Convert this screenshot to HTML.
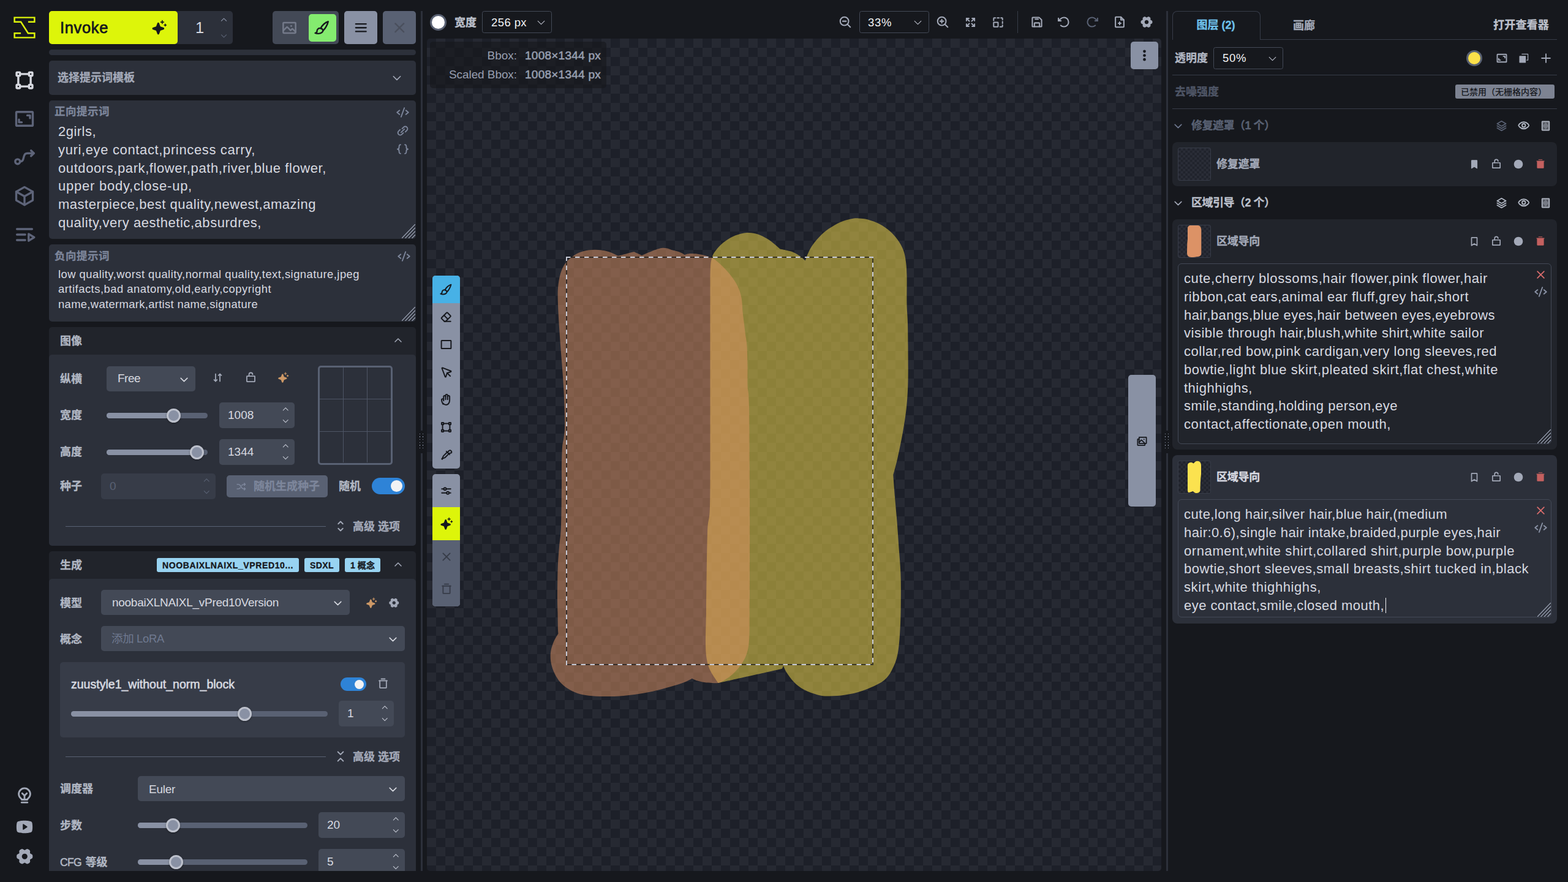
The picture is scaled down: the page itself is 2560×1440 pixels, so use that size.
<!DOCTYPE html>
<html lang="zh"><head><meta charset="utf-8"><title>Invoke - Canvas</title>
<style>
html,body{margin:0;padding:0}
body{width:2560px;height:1440px;background:#16181d;position:relative;overflow:hidden;font-family:"Liberation Sans","Noto Sans CJK SC",sans-serif;}
body div,body svg{position:absolute;box-sizing:border-box}
.t{white-space:pre}
</style></head><body>
<svg viewBox="0 0 44 44" style="left:22px;top:27px;width:36px;height:36px"><path d="M29.1951 10.6667H42V2H2V10.6667H14.8049L29.1951 33.3333H42V42H2V33.3333H14.8049" fill="none" stroke="#ddf50a" stroke-width="3"/></svg>
<svg viewBox="0 0 256 256" style="left:22.0px;top:113.0px;width:36px;height:36px;color:#d7d9e0;"><rect x="36" y="36" width="40" height="40" rx="6" fill="none" stroke="currentColor" stroke-width="24" stroke-linecap="round" stroke-linejoin="round"/><rect x="180" y="36" width="40" height="40" rx="6" fill="none" stroke="currentColor" stroke-width="24" stroke-linecap="round" stroke-linejoin="round"/><rect x="36" y="180" width="40" height="40" rx="6" fill="none" stroke="currentColor" stroke-width="24" stroke-linecap="round" stroke-linejoin="round"/><rect x="180" y="180" width="40" height="40" rx="6" fill="none" stroke="currentColor" stroke-width="24" stroke-linecap="round" stroke-linejoin="round"/><line x1="76" y1="56" x2="180" y2="56" fill="none" stroke="currentColor" stroke-width="24" stroke-linecap="round" stroke-linejoin="round"/><line x1="76" y1="200" x2="180" y2="200" fill="none" stroke="currentColor" stroke-width="24" stroke-linecap="round" stroke-linejoin="round"/><line x1="56" y1="76" x2="56" y2="180" fill="none" stroke="currentColor" stroke-width="24" stroke-linecap="round" stroke-linejoin="round"/><line x1="200" y1="76" x2="200" y2="180" fill="none" stroke="currentColor" stroke-width="24" stroke-linecap="round" stroke-linejoin="round"/></svg>
<svg viewBox="0 0 256 256" style="left:22.0px;top:176.0px;width:36px;height:36px;color:#5e6479;"><rect x="32" y="48" width="192" height="160" rx="8" fill="none" stroke="currentColor" stroke-width="24" stroke-linecap="round" stroke-linejoin="round"/><polyline points="160,88 192,88 192,120" fill="none" stroke="currentColor" stroke-width="24" stroke-linecap="round" stroke-linejoin="round"/><polyline points="96,168 64,168 64,136" fill="none" stroke="currentColor" stroke-width="24" stroke-linecap="round" stroke-linejoin="round"/></svg>
<svg viewBox="0 0 256 256" style="left:22.0px;top:239.0px;width:36px;height:36px;color:#5e6479;"><circle cx="48" cy="176" r="28" fill="none" stroke="currentColor" stroke-width="24" stroke-linecap="round" stroke-linejoin="round"/><path d="M76,176 C140,176 96,80 164,80 L236,80" fill="none" stroke="currentColor" stroke-width="24" stroke-linecap="round" stroke-linejoin="round"/><polyline points="204,48 236,80 204,112" fill="none" stroke="currentColor" stroke-width="24" stroke-linecap="round" stroke-linejoin="round"/></svg>
<svg viewBox="0 0 256 256" style="left:22.0px;top:302.0px;width:36px;height:36px;color:#5e6479;"><polygon points="128,24 224,78 224,178 128,232 32,178 32,78" fill="none" stroke="currentColor" stroke-width="24" stroke-linecap="round" stroke-linejoin="round"/><polyline points="32,78 128,132 224,78" fill="none" stroke="currentColor" stroke-width="24" stroke-linecap="round" stroke-linejoin="round"/><line x1="128" y1="132" x2="128" y2="232" fill="none" stroke="currentColor" stroke-width="24" stroke-linecap="round" stroke-linejoin="round"/></svg>
<svg viewBox="0 0 256 256" style="left:22.0px;top:365.0px;width:36px;height:36px;color:#5e6479;"><line x1="40" y1="64" x2="216" y2="64" fill="none" stroke="currentColor" stroke-width="24" stroke-linecap="round" stroke-linejoin="round"/><line x1="40" y1="128" x2="136" y2="128" fill="none" stroke="currentColor" stroke-width="24" stroke-linecap="round" stroke-linejoin="round"/><line x1="40" y1="192" x2="136" y2="192" fill="none" stroke="currentColor" stroke-width="24" stroke-linecap="round" stroke-linejoin="round"/><polygon points="240,160 176,200 176,120" fill="none" stroke="currentColor" stroke-width="24" stroke-linecap="round" stroke-linejoin="round"/></svg>
<svg viewBox="0 0 256 256" style="left:25.0px;top:1283.0px;width:30px;height:30px;color:#a3a9b8;"><line x1="88" y1="232" x2="168" y2="232" fill="none" stroke="currentColor" stroke-width="24" stroke-linecap="round" stroke-linejoin="round"/><path d="M78,176 a80,80 0 1 1 100,0 a16,16 0 0 0 -10,16 H88 a16,16 0 0 0 -10,-16 Z" fill="none" stroke="currentColor" stroke-width="24" stroke-linecap="round" stroke-linejoin="round"/><polyline points="96,104 128,136 160,104" fill="none" stroke="currentColor" stroke-width="24" stroke-linecap="round" stroke-linejoin="round"/><line x1="128" y1="136" x2="128" y2="192" fill="none" stroke="currentColor" stroke-width="24" stroke-linecap="round" stroke-linejoin="round"/></svg>
<svg viewBox="0 0 256 256" style="left:25.0px;top:1335.0px;width:30px;height:30px;color:#a3a9b8;"><path fill-rule="evenodd" fill="currentColor" stroke="none" d="M234,70 a24,24 0 0 0 -15,-17 C186,40 131,40 128,40 s-58,0 -91,13 a24,24 0 0 0 -15,17 C20,79 16,96 16,128 s4,49 6,58 a24,24 0 0 0 15,17 c32,12.5 87,13 91,13 s59,-0.5 91,-13 a24,24 0 0 0 15,-17 c2,-9 6,-26 6,-58 s-4,-49 -6,-58 Z M164,134.7 l-48,32 A8,8 0 0 1 104,160 V96 a8,8 0 0 1 12,-6.7 l48,32 a8,8 0 0 1 0,13.4 Z"/></svg>
<svg viewBox="0 0 256 256" style="left:24.75px;top:1382.75px;width:30.5px;height:30.5px;color:#a3a9b8;"><path fill-rule="evenodd" fill="currentColor" d="M238.0,128.0 L237.7,135.2 L236.7,142.3 L234.1,149.1 L229.2,155.1 L222.1,159.9 L214.0,163.6 L206.9,166.9 L202.5,171.0 L201.1,176.9 L201.8,184.7 L202.7,193.5 L202.1,202.1 L199.3,209.3 L194.8,215.0 L189.1,219.4 L183.0,223.3 L176.6,226.6 L170.0,229.3 L162.8,230.5 L155.1,229.2 L147.4,225.4 L140.1,220.3 L133.8,215.8 L128.0,214.0 L122.2,215.8 L115.9,220.3 L108.6,225.4 L100.9,229.2 L93.2,230.5 L86.0,229.3 L79.4,226.6 L73.0,223.3 L66.9,219.4 L61.2,215.0 L56.7,209.3 L53.9,202.1 L53.3,193.5 L54.2,184.7 L54.9,176.9 L53.5,171.0 L49.1,166.9 L42.0,163.6 L33.9,159.9 L26.8,155.1 L21.9,149.1 L19.3,142.3 L18.3,135.2 L18.0,128.0 L18.3,120.8 L19.3,113.7 L21.9,106.9 L26.8,100.9 L33.9,96.1 L42.0,92.4 L49.1,89.1 L53.5,85.0 L54.9,79.1 L54.2,71.3 L53.3,62.5 L53.9,53.9 L56.7,46.7 L61.2,41.0 L66.9,36.6 L73.0,32.7 L79.4,29.4 L86.0,26.7 L93.2,25.5 L100.9,26.8 L108.6,30.6 L115.9,35.7 L122.2,40.2 L128.0,42.0 L133.8,40.2 L140.1,35.7 L147.4,30.6 L155.1,26.8 L162.8,25.5 L170.0,26.7 L176.6,29.4 L183.0,32.7 L189.1,36.6 L194.8,41.0 L199.3,46.7 L202.1,53.9 L202.7,62.5 L201.8,71.3 L201.1,79.1 L202.5,85.0 L206.9,89.1 L214.0,92.4 L222.1,96.1 L229.2,100.9 L234.1,106.9 L236.7,113.7 L237.7,120.8Z M128,90 a38,38 0 1 0 0.01,0Z"/></svg>
<div style="left:80px;top:18px;width:300px;height:54px;background:#2c303a;border-radius:5px;"></div>
<div style="left:80px;top:18px;width:210px;height:54px;background:#ddf50a;border-radius:5px;"></div>
<div class="t" style="top:27.0px;height:36px;line-height:36px;font-size:25.5px;color:#16181d;-webkit-text-stroke:0.77px currentColor;letter-spacing:0.643px;left:98px;">Invoke</div>
<svg viewBox="0 0 256 256" style="left:247.0px;top:32.0px;width:26px;height:26px;color:#16181d;"><path fill="currentColor" stroke="none" d="M208,144a15.78,15.78,0,0,1-10.42,14.94L146,178l-19,51.62a15.92,15.92,0,0,1-29.88,0L78,178l-51.62-19a15.92,15.92,0,0,1,0-29.88L78,110l19-51.62a15.92,15.92,0,0,1,29.88,0L146,110l51.62,19A15.78,15.78,0,0,1,208,144ZM152,48h16V64a8,8,0,0,0,16,0V48h16a8,8,0,0,0,0-16H184V16a8,8,0,0,0-16,0V32H152a8,8,0,0,0,0,16Zm88,32h-8V72a8,8,0,0,0-16,0v8h-8a8,8,0,0,0,0,16h8v8a8,8,0,0,0,16,0V96h8a8,8,0,0,0,0-16Z"/></svg>
<div class="t" style="top:27.0px;height:36px;line-height:36px;font-size:25.5px;color:#d7d9e0;left:318.91px;">1</div>
<svg viewBox="0 0 256 256" style="left:358.5px;top:25.5px;width:13px;height:13px;color:#8991a4;"><polyline points="48,160 128,80 208,160" fill="none" stroke="currentColor" stroke-width="24" stroke-linecap="round" stroke-linejoin="round"/></svg>
<svg viewBox="0 0 256 256" style="left:358.5px;top:51.5px;width:13px;height:13px;color:#596173;"><polyline points="208,96 128,176 48,96" fill="none" stroke="currentColor" stroke-width="24" stroke-linecap="round" stroke-linejoin="round"/></svg>
<div style="left:445px;top:18px;width:108px;height:54px;background:#434956;border-radius:5px;"></div>
<svg viewBox="0 0 256 256" style="left:458.5px;top:31.5px;width:27px;height:27px;color:#747a8a;"><rect x="32" y="48" width="192" height="160" rx="8" fill="none" stroke="currentColor" stroke-width="24" stroke-linecap="round" stroke-linejoin="round"/><circle cx="156" cy="100" r="14" fill="currentColor" stroke="none"/><path d="M32,172 L86,118 a8,8 0 0 1 11,0 L146,167 l22,-22 a8,8 0 0 1 11,0 L224,190" fill="none" stroke="currentColor" stroke-width="24" stroke-linecap="round" stroke-linejoin="round"/></svg>
<div style="left:504px;top:23px;width:45px;height:45px;background:#84eb6f;border-radius:5px;"></div>
<svg viewBox="0 0 256 256" style="left:513.0px;top:32.0px;width:26px;height:26px;color:#16181d;"><path d="M224,32 C180,40 120,100 104,140 a44,44 0 0 1 36,36 C170,160 216,76 224,32 Z" fill="none" stroke="currentColor" stroke-width="24" stroke-linecap="round" stroke-linejoin="round"/><path d="M104,140 C60,130 40,170 44,196 C36,210 24,216 16,216 C40,228 100,232 128,204 C140,192 142,180 140,176" fill="none" stroke="currentColor" stroke-width="24" stroke-linecap="round" stroke-linejoin="round"/></svg>
<div style="left:562px;top:18px;width:54px;height:54px;background:#8991a4;border-radius:5px;"></div>
<svg viewBox="0 0 256 256" style="left:576.75px;top:32.75px;width:24.5px;height:24.5px;color:#16181d;"><line x1="40" y1="64" x2="216" y2="64" fill="none" stroke="currentColor" stroke-width="24" stroke-linecap="round" stroke-linejoin="round"/><line x1="40" y1="128" x2="216" y2="128" fill="none" stroke="currentColor" stroke-width="24" stroke-linecap="round" stroke-linejoin="round"/><line x1="40" y1="192" x2="216" y2="192" fill="none" stroke="currentColor" stroke-width="24" stroke-linecap="round" stroke-linejoin="round"/></svg>
<div style="left:625px;top:18px;width:54px;height:54px;background:#596173;border-radius:5px;"></div>
<svg viewBox="0 0 256 256" style="left:639.75px;top:32.75px;width:24.5px;height:24.5px;color:#4a4f5d;"><line x1="200" y1="56" x2="56" y2="200" fill="none" stroke="currentColor" stroke-width="24" stroke-linecap="round" stroke-linejoin="round"/><line x1="200" y1="200" x2="56" y2="56" fill="none" stroke="currentColor" stroke-width="24" stroke-linecap="round" stroke-linejoin="round"/></svg>
<div style="left:80px;top:81px;width:599px;height:9px;background:#2c303a;border-radius:4.5px;"></div>
<div style="left:80px;top:99px;width:599px;height:56px;background:#2c303a;border-radius:5px;"></div>
<div class="t" style="top:115.0px;height:25px;line-height:25px;font-size:18px;color:#a3a9b8;font-weight:700;-webkit-text-stroke:0.3px currentColor;left:94px;">选择提示词模板</div>
<svg viewBox="0 0 256 256" style="left:639.0px;top:118.0px;width:18px;height:18px;color:#a3a9b8;"><polyline points="208,96 128,176 48,96" fill="none" stroke="currentColor" stroke-width="24" stroke-linecap="round" stroke-linejoin="round"/></svg>
<div style="left:80px;top:164px;width:599px;height:226px;background:#2c303a;border-radius:5px;"></div>
<div class="t" style="top:170.0px;height:24px;line-height:24px;font-size:17.5px;color:#7d869b;font-weight:700;-webkit-text-stroke:0.3px currentColor;letter-spacing:0.500px;left:89px;">正向提示词</div>
<svg viewBox="0 0 256 256" style="left:646.5px;top:172.5px;width:21px;height:21px;color:#7d869b;"><polyline points="64,88 16,128 64,168" fill="none" stroke="currentColor" stroke-width="24" stroke-linecap="round" stroke-linejoin="round"/><polyline points="192,88 240,128 192,168" fill="none" stroke="currentColor" stroke-width="24" stroke-linecap="round" stroke-linejoin="round"/><line x1="160" y1="40" x2="96" y2="216" fill="none" stroke="currentColor" stroke-width="24" stroke-linecap="round" stroke-linejoin="round"/></svg>
<svg viewBox="0 0 256 256" style="left:646.5px;top:202.5px;width:21px;height:21px;color:#7d869b;"><line x1="96" y1="160" x2="160" y2="96" fill="none" stroke="currentColor" stroke-width="24" stroke-linecap="round" stroke-linejoin="round"/><path d="M181,149.5l29.5,-29.5a45.25,45.25 0 0 0 -64,-64L117,85.5" fill="none" stroke="currentColor" stroke-width="24" stroke-linecap="round" stroke-linejoin="round"/><path d="M139,170.5l-29.5,29.5a45.25,45.25 0 0 1 -64,-64L75,106.5" fill="none" stroke="currentColor" stroke-width="24" stroke-linecap="round" stroke-linejoin="round"/></svg>
<svg viewBox="0 0 256 256" style="left:646.5px;top:232.5px;width:21px;height:21px;color:#7d869b;"><path d="M84,40 C56,40 56,56 56,84 C56,112 48,128 24,128 C48,128 56,144 56,172 C56,200 56,216 84,216" fill="none" stroke="currentColor" stroke-width="24" stroke-linecap="round" stroke-linejoin="round"/><path d="M172,40 C200,40 200,56 200,84 C200,112 208,128 232,128 C208,128 200,144 200,172 C200,200 200,216 172,216" fill="none" stroke="currentColor" stroke-width="24" stroke-linecap="round" stroke-linejoin="round"/></svg>
<div class="t" style="top:199.0px;height:31px;line-height:31px;font-size:22px;color:#d7d9e0;letter-spacing:0.473px;left:95px;">2girls,</div>
<div class="t" style="top:228.75px;height:31px;line-height:31px;font-size:22px;color:#d7d9e0;letter-spacing:0.638px;left:95px;">yuri,eye contact,princess carry,</div>
<div class="t" style="top:258.5px;height:31px;line-height:31px;font-size:22px;color:#d7d9e0;letter-spacing:0.588px;left:95px;">outdoors,park,flower,path,river,blue flower,</div>
<div class="t" style="top:288.25px;height:31px;line-height:31px;font-size:22px;color:#d7d9e0;letter-spacing:0.758px;left:95px;">upper body,close-up,</div>
<div class="t" style="top:318.0px;height:31px;line-height:31px;font-size:22px;color:#d7d9e0;letter-spacing:0.521px;left:95px;">masterpiece,best quality,newest,amazing</div>
<div class="t" style="top:347.75px;height:31px;line-height:31px;font-size:22px;color:#d7d9e0;letter-spacing:0.550px;left:95px;">quality,very aesthetic,absurdres,</div>
<svg viewBox="0 0 22 23" style="left:655.5px;top:365.7px;width:22px;height:23px"><path d="M0,23 L22,0 M5.5,23 L22,5.75 M11,23 L22,11.5 M16.5,23 L22,17.25" stroke="#979eaf" stroke-width="1.3" fill="none"/></svg>
<div style="left:80px;top:399px;width:599px;height:126px;background:#2c303a;border-radius:5px;"></div>
<div class="t" style="top:406.0px;height:24px;line-height:24px;font-size:17.5px;color:#7d869b;font-weight:700;-webkit-text-stroke:0.3px currentColor;letter-spacing:0.500px;left:89px;">负向提示词</div>
<svg viewBox="0 0 256 256" style="left:648.5px;top:407.5px;width:21px;height:21px;color:#7d869b;"><polyline points="64,88 16,128 64,168" fill="none" stroke="currentColor" stroke-width="24" stroke-linecap="round" stroke-linejoin="round"/><polyline points="192,88 240,128 192,168" fill="none" stroke="currentColor" stroke-width="24" stroke-linecap="round" stroke-linejoin="round"/><line x1="160" y1="40" x2="96" y2="216" fill="none" stroke="currentColor" stroke-width="24" stroke-linecap="round" stroke-linejoin="round"/></svg>
<div class="t" style="top:434.5px;height:26px;line-height:26px;font-size:18.4px;color:#d7d9e0;letter-spacing:0.465px;left:95px;">low quality,worst quality,normal quality,text,signature,jpeg</div>
<div class="t" style="top:459.0px;height:26px;line-height:26px;font-size:18.4px;color:#d7d9e0;letter-spacing:0.501px;left:95px;">artifacts,bad anatomy,old,early,copyright</div>
<div class="t" style="top:483.5px;height:26px;line-height:26px;font-size:18.4px;color:#d7d9e0;letter-spacing:0.339px;left:95px;">name,watermark,artist name,signature</div>
<svg viewBox="0 0 22 23" style="left:655.5px;top:500.7px;width:22px;height:23px"><path d="M0,23 L22,0 M5.5,23 L22,5.75 M11,23 L22,11.5 M16.5,23 L22,17.25" stroke="#979eaf" stroke-width="1.3" fill="none"/></svg>
<div style="left:80px;top:534px;width:599px;height:357px;background:#21242b;border-radius:5px;"></div>
<div style="left:80px;top:579px;width:599px;height:312px;background:#2c303a;border-radius:5px;"></div>
<div class="t" style="top:544.5px;height:25px;line-height:25px;font-size:18px;color:#b1b7c3;font-weight:700;-webkit-text-stroke:0.3px currentColor;left:98px;">图像</div>
<svg viewBox="0 0 256 256" style="left:642.0px;top:548.0px;width:16px;height:16px;color:#a3a9b8;"><polyline points="48,160 128,80 208,160" fill="none" stroke="currentColor" stroke-width="24" stroke-linecap="round" stroke-linejoin="round"/></svg>
<div class="t" style="top:607.0px;height:25px;line-height:25px;font-size:18px;color:#b1b7c3;font-weight:700;-webkit-text-stroke:0.3px currentColor;left:98px;">纵横</div>
<div style="left:174px;top:598px;width:145px;height:41px;background:#434956;border-radius:5px;"></div>
<div class="t" style="top:604.2px;height:27px;line-height:27px;font-size:19px;color:#d7d9e0;letter-spacing:-0.520px;left:192px;">Free</div>
<svg viewBox="0 0 256 256" style="left:291.5px;top:610.5px;width:17px;height:17px;color:#d7d9e0;"><polyline points="208,96 128,176 48,96" fill="none" stroke="currentColor" stroke-width="24" stroke-linecap="round" stroke-linejoin="round"/></svg>
<svg viewBox="0 0 256 256" style="left:345.5px;top:606.5px;width:19px;height:19px;color:#a3a9b8;"><polyline points="112,176 80,208 48,176" fill="none" stroke="currentColor" stroke-width="24" stroke-linecap="round" stroke-linejoin="round"/><line x1="80" y1="48" x2="80" y2="208" fill="none" stroke="currentColor" stroke-width="24" stroke-linecap="round" stroke-linejoin="round"/><polyline points="144,80 176,48 208,80" fill="none" stroke="currentColor" stroke-width="24" stroke-linecap="round" stroke-linejoin="round"/><line x1="176" y1="208" x2="176" y2="48" fill="none" stroke="currentColor" stroke-width="24" stroke-linecap="round" stroke-linejoin="round"/></svg>
<svg viewBox="0 0 256 256" style="left:399.5px;top:606.5px;width:19px;height:19px;color:#a3a9b8;"><rect x="40" y="96" width="176" height="120" rx="8" fill="none" stroke="currentColor" stroke-width="24" stroke-linecap="round" stroke-linejoin="round"/><path d="M88,96 V60 a40,40 0 0 1 80,0" fill="none" stroke="currentColor" stroke-width="24" stroke-linecap="round" stroke-linejoin="round"/></svg>
<svg viewBox="0 0 256 256" style="left:452.5px;top:606.5px;width:19px;height:19px;color:#cd9866;"><path fill="currentColor" stroke="none" d="M208,144a15.78,15.78,0,0,1-10.42,14.94L146,178l-19,51.62a15.92,15.92,0,0,1-29.88,0L78,178l-51.62-19a15.92,15.92,0,0,1,0-29.88L78,110l19-51.62a15.92,15.92,0,0,1,29.88,0L146,110l51.62,19A15.78,15.78,0,0,1,208,144ZM152,48h16V64a8,8,0,0,0,16,0V48h16a8,8,0,0,0,0-16H184V16a8,8,0,0,0-16,0V32H152a8,8,0,0,0,0,16Zm88,32h-8V72a8,8,0,0,0-16,0v8h-8a8,8,0,0,0,0,16h8v8a8,8,0,0,0,16,0V96h8a8,8,0,0,0,0-16Z"/></svg>
<div style="left:519px;top:597px;width:122px;height:162px;border-radius:5px;border:3px solid #596173;"></div>
<div style="left:560px;top:600px;width:1px;height:155px;background:#4e5565;"></div>
<div style="left:598.5px;top:600px;width:1px;height:155px;background:#4e5565;"></div>
<div style="left:522px;top:651px;width:116px;height:1px;background:#4e5565;"></div>
<div style="left:522px;top:704px;width:116px;height:1px;background:#4e5565;"></div>
<div class="t" style="top:665.5px;height:25px;line-height:25px;font-size:18px;color:#b1b7c3;font-weight:700;-webkit-text-stroke:0.3px currentColor;left:98px;">宽度</div>
<div style="left:174px;top:673.5px;width:165px;height:9px;background:#596173;border-radius:4.5px;"></div>
<div style="left:174px;top:673.5px;width:109px;height:9px;background:#8991a4;border-radius:4.5px;"></div>
<div style="left:271.5px;top:666.5px;width:23px;height:23px;background:#8991a4;border-radius:12px;border:3px solid #bdc1cc;box-shadow:0 1px 3px rgba(0,0,0,.4);"></div>
<div style="left:358px;top:657px;width:123px;height:42px;background:#434956;border-radius:5px;"></div>
<div class="t" style="top:664.3px;height:27px;line-height:27px;font-size:19px;color:#d7d9e0;left:372px;">1008</div>
<svg viewBox="0 0 256 256" style="left:459.75px;top:662.25px;width:12.5px;height:12.5px;color:#bdc1cc;"><polyline points="48,160 128,80 208,160" fill="none" stroke="currentColor" stroke-width="24" stroke-linecap="round" stroke-linejoin="round"/></svg>
<svg viewBox="0 0 256 256" style="left:459.75px;top:681.25px;width:12.5px;height:12.5px;color:#bdc1cc;"><polyline points="208,96 128,176 48,96" fill="none" stroke="currentColor" stroke-width="24" stroke-linecap="round" stroke-linejoin="round"/></svg>
<div class="t" style="top:725.5px;height:25px;line-height:25px;font-size:18px;color:#b1b7c3;font-weight:700;-webkit-text-stroke:0.3px currentColor;left:98px;">高度</div>
<div style="left:174px;top:733.5px;width:165px;height:9px;background:#596173;border-radius:4.5px;"></div>
<div style="left:174px;top:733.5px;width:147px;height:9px;background:#8991a4;border-radius:4.5px;"></div>
<div style="left:309.5px;top:726.5px;width:23px;height:23px;background:#8991a4;border-radius:12px;border:3px solid #bdc1cc;box-shadow:0 1px 3px rgba(0,0,0,.4);"></div>
<div style="left:358px;top:717px;width:123px;height:42px;background:#434956;border-radius:5px;"></div>
<div class="t" style="top:724.3px;height:27px;line-height:27px;font-size:19px;color:#d7d9e0;left:372px;">1344</div>
<svg viewBox="0 0 256 256" style="left:459.75px;top:722.25px;width:12.5px;height:12.5px;color:#bdc1cc;"><polyline points="48,160 128,80 208,160" fill="none" stroke="currentColor" stroke-width="24" stroke-linecap="round" stroke-linejoin="round"/></svg>
<svg viewBox="0 0 256 256" style="left:459.75px;top:741.25px;width:12.5px;height:12.5px;color:#bdc1cc;"><polyline points="208,96 128,176 48,96" fill="none" stroke="currentColor" stroke-width="24" stroke-linecap="round" stroke-linejoin="round"/></svg>
<div class="t" style="top:781.5px;height:25px;line-height:25px;font-size:18px;color:#b1b7c3;font-weight:700;-webkit-text-stroke:0.3px currentColor;left:98px;">种子</div>
<div style="left:165px;top:773px;width:187px;height:42px;background:#373c48;border-radius:5px;"></div>
<div class="t" style="top:780.3px;height:27px;line-height:27px;font-size:19px;color:#596173;left:179px;">0</div>
<svg viewBox="0 0 256 256" style="left:330.75px;top:778.25px;width:12.5px;height:12.5px;color:#596173;"><polyline points="48,160 128,80 208,160" fill="none" stroke="currentColor" stroke-width="24" stroke-linecap="round" stroke-linejoin="round"/></svg>
<svg viewBox="0 0 256 256" style="left:330.75px;top:797.25px;width:12.5px;height:12.5px;color:#596173;"><polyline points="208,96 128,176 48,96" fill="none" stroke="currentColor" stroke-width="24" stroke-linecap="round" stroke-linejoin="round"/></svg>
<div style="left:370px;top:776px;width:165px;height:36px;background:#596173;border-radius:5px;"></div>
<svg viewBox="0 0 256 256" style="left:384.5px;top:785.5px;width:17px;height:17px;color:#7d869b;"><path d="M32,72 H56 a64,64 0 0 1 52,27 l40,58 a64,64 0 0 0 52,27 h32" fill="none" stroke="currentColor" stroke-width="24" stroke-linecap="round" stroke-linejoin="round"/><polyline points="208,48 232,72 208,96" fill="none" stroke="currentColor" stroke-width="24" stroke-linecap="round" stroke-linejoin="round"/><polyline points="208,160 232,184 208,208" fill="none" stroke="currentColor" stroke-width="24" stroke-linecap="round" stroke-linejoin="round"/><path d="M148,99 a64,64 0 0 1 52,-27 h32" fill="none" stroke="currentColor" stroke-width="24" stroke-linecap="round" stroke-linejoin="round"/><path d="M32,184 H56 a64,64 0 0 0 52,-27" fill="none" stroke="currentColor" stroke-width="24" stroke-linecap="round" stroke-linejoin="round"/></svg>
<div class="t" style="top:781.5px;height:25px;line-height:25px;font-size:18px;color:#7d869b;font-weight:700;-webkit-text-stroke:0.3px currentColor;left:414px;">随机生成种子</div>
<div class="t" style="top:781.5px;height:25px;line-height:25px;font-size:18px;color:#b1b7c3;font-weight:700;-webkit-text-stroke:0.3px currentColor;left:553px;">随机</div>
<div style="left:607px;top:780px;width:54px;height:27px;background:#2e83d7;border-radius:13.5px;"></div>
<div style="left:638px;top:784px;width:19px;height:19px;background:#f1f2f4;border-radius:9.5px;"></div>
<div style="left:107px;top:858.5px;width:425px;height:1px;background:#596173;"></div>
<svg viewBox="0 0 256 256" style="left:546.0px;top:849.0px;width:20px;height:20px;color:#a3a9b8;"><polyline points="80,176 128,224 176,176" fill="none" stroke="currentColor" stroke-width="24" stroke-linecap="round" stroke-linejoin="round"/><polyline points="80,80 128,32 176,80" fill="none" stroke="currentColor" stroke-width="24" stroke-linecap="round" stroke-linejoin="round"/></svg>
<div class="t" style="top:848.0px;height:25px;line-height:25px;font-size:18px;color:#a3a9b8;font-weight:700;-webkit-text-stroke:0.3px currentColor;left:576px;">高级 选项</div>
<div style="left:80px;top:900px;width:599px;height:540px;background:#21242b;border-radius:5px;"></div>
<div style="left:80px;top:945px;width:599px;height:500px;background:#2c303a;border-radius:5px 5px 0 0;"></div>
<div class="t" style="top:911.0px;height:25px;line-height:25px;font-size:18px;color:#b1b7c3;font-weight:700;-webkit-text-stroke:0.3px currentColor;left:98px;">生成</div>
<div style="left:256px;top:911px;width:232px;height:23px;background:#98d3f1;border-radius:3px;"></div>
<div class="t" style="top:912.5px;height:20px;line-height:20px;font-size:14px;color:#16181d;font-weight:700;-webkit-text-stroke:0.3px currentColor;letter-spacing:0.618px;left:265px;">NOOBAIXLNAIXL_VPRED10...</div>
<div style="left:497px;top:911px;width:57px;height:23px;background:#98d3f1;border-radius:3px;"></div>
<div class="t" style="top:912.5px;height:20px;line-height:20px;font-size:14px;color:#16181d;font-weight:700;-webkit-text-stroke:0.3px currentColor;letter-spacing:0.414px;left:506px;">SDXL</div>
<div style="left:563px;top:911px;width:58px;height:23px;background:#98d3f1;border-radius:3px;"></div>
<div class="t" style="top:912.5px;height:20px;line-height:20px;font-size:14px;color:#16181d;font-weight:700;-webkit-text-stroke:0.3px currentColor;letter-spacing:0.078px;left:572px;">1 概念</div>
<svg viewBox="0 0 256 256" style="left:642.0px;top:914.0px;width:16px;height:16px;color:#a3a9b8;"><polyline points="48,160 128,80 208,160" fill="none" stroke="currentColor" stroke-width="24" stroke-linecap="round" stroke-linejoin="round"/></svg>
<div class="t" style="top:972.5px;height:25px;line-height:25px;font-size:18px;color:#b1b7c3;font-weight:700;-webkit-text-stroke:0.3px currentColor;left:98px;">模型</div>
<div style="left:165px;top:963px;width:406px;height:41px;background:#434956;border-radius:5px;"></div>
<div class="t" style="top:969.5px;height:27px;line-height:27px;font-size:19px;color:#d7d9e0;letter-spacing:-0.283px;left:183px;">noobaiXLNAIXL_vPred10Version</div>
<svg viewBox="0 0 256 256" style="left:542.5px;top:975.5px;width:17px;height:17px;color:#d7d9e0;"><polyline points="208,96 128,176 48,96" fill="none" stroke="currentColor" stroke-width="24" stroke-linecap="round" stroke-linejoin="round"/></svg>
<svg viewBox="0 0 256 256" style="left:596.5px;top:974.5px;width:19px;height:19px;color:#cd9866;"><path fill="currentColor" stroke="none" d="M208,144a15.78,15.78,0,0,1-10.42,14.94L146,178l-19,51.62a15.92,15.92,0,0,1-29.88,0L78,178l-51.62-19a15.92,15.92,0,0,1,0-29.88L78,110l19-51.62a15.92,15.92,0,0,1,29.88,0L146,110l51.62,19A15.78,15.78,0,0,1,208,144ZM152,48h16V64a8,8,0,0,0,16,0V48h16a8,8,0,0,0,0-16H184V16a8,8,0,0,0-16,0V32H152a8,8,0,0,0,0,16Zm88,32h-8V72a8,8,0,0,0-16,0v8h-8a8,8,0,0,0,0,16h8v8a8,8,0,0,0,16,0V96h8a8,8,0,0,0,0-16Z"/></svg>
<svg viewBox="0 0 256 256" style="left:633.75px;top:974.75px;width:18.5px;height:18.5px;color:#a3a9b8;"><path fill-rule="evenodd" fill="currentColor" d="M238.0,128.0 L237.7,135.2 L236.7,142.3 L234.1,149.1 L229.2,155.1 L222.1,159.9 L214.0,163.6 L206.9,166.9 L202.5,171.0 L201.1,176.9 L201.8,184.7 L202.7,193.5 L202.1,202.1 L199.3,209.3 L194.8,215.0 L189.1,219.4 L183.0,223.3 L176.6,226.6 L170.0,229.3 L162.8,230.5 L155.1,229.2 L147.4,225.4 L140.1,220.3 L133.8,215.8 L128.0,214.0 L122.2,215.8 L115.9,220.3 L108.6,225.4 L100.9,229.2 L93.2,230.5 L86.0,229.3 L79.4,226.6 L73.0,223.3 L66.9,219.4 L61.2,215.0 L56.7,209.3 L53.9,202.1 L53.3,193.5 L54.2,184.7 L54.9,176.9 L53.5,171.0 L49.1,166.9 L42.0,163.6 L33.9,159.9 L26.8,155.1 L21.9,149.1 L19.3,142.3 L18.3,135.2 L18.0,128.0 L18.3,120.8 L19.3,113.7 L21.9,106.9 L26.8,100.9 L33.9,96.1 L42.0,92.4 L49.1,89.1 L53.5,85.0 L54.9,79.1 L54.2,71.3 L53.3,62.5 L53.9,53.9 L56.7,46.7 L61.2,41.0 L66.9,36.6 L73.0,32.7 L79.4,29.4 L86.0,26.7 L93.2,25.5 L100.9,26.8 L108.6,30.6 L115.9,35.7 L122.2,40.2 L128.0,42.0 L133.8,40.2 L140.1,35.7 L147.4,30.6 L155.1,26.8 L162.8,25.5 L170.0,26.7 L176.6,29.4 L183.0,32.7 L189.1,36.6 L194.8,41.0 L199.3,46.7 L202.1,53.9 L202.7,62.5 L201.8,71.3 L201.1,79.1 L202.5,85.0 L206.9,89.1 L214.0,92.4 L222.1,96.1 L229.2,100.9 L234.1,106.9 L236.7,113.7 L237.7,120.8Z M128,90 a38,38 0 1 0 0.01,0Z"/></svg>
<div class="t" style="top:1031.5px;height:25px;line-height:25px;font-size:18px;color:#b1b7c3;font-weight:700;-webkit-text-stroke:0.3px currentColor;left:98px;">概念</div>
<div style="left:165px;top:1022px;width:496px;height:41px;background:#434956;border-radius:5px;"></div>
<div class="t" style="top:1029.5px;height:26px;line-height:26px;font-size:18.5px;color:#6f7990;letter-spacing:-0.346px;left:182px;">添加 LoRA</div>
<svg viewBox="0 0 256 256" style="left:632.5px;top:1034.5px;width:17px;height:17px;color:#d7d9e0;"><polyline points="208,96 128,176 48,96" fill="none" stroke="currentColor" stroke-width="24" stroke-linecap="round" stroke-linejoin="round"/></svg>
<div style="left:98px;top:1081px;width:563px;height:123px;background:#373c48;border-radius:5px;"></div>
<div class="t" style="top:1103.5px;height:27px;line-height:27px;font-size:19.5px;color:#d7d9e0;-webkit-text-stroke:0.58px currentColor;letter-spacing:0.012px;left:116px;">zuustyle1_without_norm_block</div>
<div style="left:556px;top:1106px;width:42px;height:22px;background:#2e83d7;border-radius:11px;"></div>
<div style="left:579px;top:1109.5px;width:15px;height:15px;background:#f1f2f4;border-radius:8px;"></div>
<svg viewBox="0 0 256 256" style="left:615.5px;top:1106.5px;width:19px;height:19px;color:#a3a9b8;"><line x1="216" y1="60" x2="40" y2="60" fill="none" stroke="currentColor" stroke-width="24" stroke-linecap="round" stroke-linejoin="round"/><line x1="88" y1="20" x2="168" y2="20" fill="none" stroke="currentColor" stroke-width="24" stroke-linecap="round" stroke-linejoin="round"/><path d="M200,60 V208 a8,8 0 0 1 -8,8 H64 a8,8 0 0 1 -8,-8 V60" fill="none" stroke="currentColor" stroke-width="24" stroke-linecap="round" stroke-linejoin="round"/></svg>
<div style="left:116px;top:1160.5px;width:419px;height:9px;background:#596173;border-radius:4.5px;"></div>
<div style="left:116px;top:1160.5px;width:283.5px;height:9px;background:#8991a4;border-radius:4.5px;"></div>
<div style="left:388.0px;top:1153.5px;width:23px;height:23px;background:#8991a4;border-radius:12px;border:3px solid #bdc1cc;box-shadow:0 1px 3px rgba(0,0,0,.4);"></div>
<div style="left:553px;top:1144px;width:90px;height:42px;background:#434956;border-radius:5px;"></div>
<div class="t" style="top:1151.3px;height:27px;line-height:27px;font-size:19px;color:#d7d9e0;left:567px;">1</div>
<svg viewBox="0 0 256 256" style="left:621.75px;top:1149.25px;width:12.5px;height:12.5px;color:#bdc1cc;"><polyline points="48,160 128,80 208,160" fill="none" stroke="currentColor" stroke-width="24" stroke-linecap="round" stroke-linejoin="round"/></svg>
<svg viewBox="0 0 256 256" style="left:621.75px;top:1168.25px;width:12.5px;height:12.5px;color:#bdc1cc;"><polyline points="208,96 128,176 48,96" fill="none" stroke="currentColor" stroke-width="24" stroke-linecap="round" stroke-linejoin="round"/></svg>
<div style="left:107px;top:1235px;width:425px;height:1px;background:#596173;"></div>
<svg viewBox="0 0 256 256" style="left:546.0px;top:1225.0px;width:20px;height:20px;color:#a3a9b8;"><polyline points="72,32 128,88 184,32" fill="none" stroke="currentColor" stroke-width="24" stroke-linecap="round" stroke-linejoin="round"/><polyline points="72,224 128,168 184,224" fill="none" stroke="currentColor" stroke-width="24" stroke-linecap="round" stroke-linejoin="round"/></svg>
<div class="t" style="top:1224.0px;height:25px;line-height:25px;font-size:18px;color:#a3a9b8;font-weight:700;-webkit-text-stroke:0.3px currentColor;left:576px;">高级 选项</div>
<div class="t" style="top:1275.5px;height:25px;line-height:25px;font-size:18px;color:#b1b7c3;font-weight:700;-webkit-text-stroke:0.3px currentColor;left:98px;">调度器</div>
<div style="left:225px;top:1267px;width:436px;height:41px;background:#434956;border-radius:5px;"></div>
<div class="t" style="top:1274.5px;height:27px;line-height:27px;font-size:19px;color:#d7d9e0;letter-spacing:-0.272px;left:243px;">Euler</div>
<svg viewBox="0 0 256 256" style="left:632.5px;top:1279.5px;width:17px;height:17px;color:#d7d9e0;"><polyline points="208,96 128,176 48,96" fill="none" stroke="currentColor" stroke-width="24" stroke-linecap="round" stroke-linejoin="round"/></svg>
<div class="t" style="top:1335.5px;height:25px;line-height:25px;font-size:18px;color:#b1b7c3;font-weight:700;-webkit-text-stroke:0.3px currentColor;left:98px;">步数</div>
<div style="left:225px;top:1342.5px;width:277px;height:9px;background:#596173;border-radius:4.5px;"></div>
<div style="left:225px;top:1342.5px;width:57px;height:9px;background:#8991a4;border-radius:4.5px;"></div>
<div style="left:270.5px;top:1335.5px;width:23px;height:23px;background:#8991a4;border-radius:12px;border:3px solid #bdc1cc;box-shadow:0 1px 3px rgba(0,0,0,.4);"></div>
<div style="left:520px;top:1326px;width:141px;height:42px;background:#434956;border-radius:5px;"></div>
<div class="t" style="top:1333.3px;height:27px;line-height:27px;font-size:19px;color:#d7d9e0;left:534px;">20</div>
<svg viewBox="0 0 256 256" style="left:639.75px;top:1331.25px;width:12.5px;height:12.5px;color:#bdc1cc;"><polyline points="48,160 128,80 208,160" fill="none" stroke="currentColor" stroke-width="24" stroke-linecap="round" stroke-linejoin="round"/></svg>
<svg viewBox="0 0 256 256" style="left:639.75px;top:1350.25px;width:12.5px;height:12.5px;color:#bdc1cc;"><polyline points="208,96 128,176 48,96" fill="none" stroke="currentColor" stroke-width="24" stroke-linecap="round" stroke-linejoin="round"/></svg>
<div class="t" style="top:1396.0px;height:24px;line-height:24px;font-size:17.5px;color:#b1b7c3;-webkit-text-stroke:0.53px currentColor;letter-spacing:-0.651px;left:98px;">CFG</div>
<div class="t" style="top:1395.5px;height:25px;line-height:25px;font-size:18px;color:#b1b7c3;font-weight:700;-webkit-text-stroke:0.3px currentColor;left:139.5px;">等级</div>
<div style="left:225px;top:1402.5px;width:277px;height:9px;background:#596173;border-radius:4.5px;"></div>
<div style="left:225px;top:1402.5px;width:62px;height:9px;background:#8991a4;border-radius:4.5px;"></div>
<div style="left:275.5px;top:1395.5px;width:23px;height:23px;background:#8991a4;border-radius:12px;border:3px solid #bdc1cc;box-shadow:0 1px 3px rgba(0,0,0,.4);"></div>
<div style="left:520px;top:1386px;width:141px;height:42px;background:#434956;border-radius:5px;"></div>
<div class="t" style="top:1393.3px;height:27px;line-height:27px;font-size:19px;color:#d7d9e0;left:534px;">5</div>
<svg viewBox="0 0 256 256" style="left:639.75px;top:1391.25px;width:12.5px;height:12.5px;color:#bdc1cc;"><polyline points="48,160 128,80 208,160" fill="none" stroke="currentColor" stroke-width="24" stroke-linecap="round" stroke-linejoin="round"/></svg>
<svg viewBox="0 0 256 256" style="left:639.75px;top:1410.25px;width:12.5px;height:12.5px;color:#bdc1cc;"><polyline points="208,96 128,176 48,96" fill="none" stroke="currentColor" stroke-width="24" stroke-linecap="round" stroke-linejoin="round"/></svg>
<div style="left:0px;top:1422px;width:694px;height:18px;background:#16181d;"></div>
<div style="left:687px;top:18px;width:3px;height:685px;background:#2c303a;"></div>
<div style="left:687px;top:740px;width:3px;height:682px;background:#2c303a;"></div>
<div style="left:684.8px;top:707.6999999999999px;width:1.3px;height:1.3px;background:#8991a4;"></div>
<div style="left:684.8px;top:712.3699999999999px;width:1.3px;height:1.3px;background:#8991a4;"></div>
<div style="left:684.8px;top:717.04px;width:1.3px;height:1.3px;background:#8991a4;"></div>
<div style="left:684.8px;top:721.7099999999999px;width:1.3px;height:1.3px;background:#8991a4;"></div>
<div style="left:684.8px;top:726.3799999999999px;width:1.3px;height:1.3px;background:#8991a4;"></div>
<div style="left:684.8px;top:731.05px;width:1.3px;height:1.3px;background:#8991a4;"></div>
<div style="left:689.9px;top:707.6999999999999px;width:1.3px;height:1.3px;background:#8991a4;"></div>
<div style="left:689.9px;top:712.3699999999999px;width:1.3px;height:1.3px;background:#8991a4;"></div>
<div style="left:689.9px;top:717.04px;width:1.3px;height:1.3px;background:#8991a4;"></div>
<div style="left:689.9px;top:721.7099999999999px;width:1.3px;height:1.3px;background:#8991a4;"></div>
<div style="left:689.9px;top:726.3799999999999px;width:1.3px;height:1.3px;background:#8991a4;"></div>
<div style="left:689.9px;top:731.05px;width:1.3px;height:1.3px;background:#8991a4;"></div>
<div style="left:1904px;top:18px;width:3px;height:685px;background:#2c303a;"></div>
<div style="left:1904px;top:740px;width:3px;height:682px;background:#2c303a;"></div>
<div style="left:1901.8000000000002px;top:707.6999999999999px;width:1.3px;height:1.3px;background:#8991a4;"></div>
<div style="left:1901.8000000000002px;top:712.3699999999999px;width:1.3px;height:1.3px;background:#8991a4;"></div>
<div style="left:1901.8000000000002px;top:717.04px;width:1.3px;height:1.3px;background:#8991a4;"></div>
<div style="left:1901.8000000000002px;top:721.7099999999999px;width:1.3px;height:1.3px;background:#8991a4;"></div>
<div style="left:1901.8000000000002px;top:726.3799999999999px;width:1.3px;height:1.3px;background:#8991a4;"></div>
<div style="left:1901.8000000000002px;top:731.05px;width:1.3px;height:1.3px;background:#8991a4;"></div>
<div style="left:1906.9px;top:707.6999999999999px;width:1.3px;height:1.3px;background:#8991a4;"></div>
<div style="left:1906.9px;top:712.3699999999999px;width:1.3px;height:1.3px;background:#8991a4;"></div>
<div style="left:1906.9px;top:717.04px;width:1.3px;height:1.3px;background:#8991a4;"></div>
<div style="left:1906.9px;top:721.7099999999999px;width:1.3px;height:1.3px;background:#8991a4;"></div>
<div style="left:1906.9px;top:726.3799999999999px;width:1.3px;height:1.3px;background:#8991a4;"></div>
<div style="left:1906.9px;top:731.05px;width:1.3px;height:1.3px;background:#8991a4;"></div>
<div style="left:702px;top:23px;width:27px;height:27px;background:#ffffff;border-radius:14px;border:3px solid #596173;"></div>
<div class="t" style="top:24.5px;height:25px;line-height:25px;font-size:18px;color:#bdc1cc;font-weight:700;-webkit-text-stroke:0.3px currentColor;left:742px;">宽度</div>
<div style="left:787px;top:18px;width:114px;height:36px;border-radius:3.5px;border:1px solid #434956;"></div>
<div class="t" style="top:23.5px;height:26px;line-height:26px;font-size:18.5px;color:#f1f2f4;letter-spacing:0.409px;left:802px;">256 px</div>
<svg viewBox="0 0 256 256" style="left:874.5px;top:27.5px;width:17px;height:17px;color:#bdc1cc;"><polyline points="208,96 128,176 48,96" fill="none" stroke="currentColor" stroke-width="16" stroke-linecap="round" stroke-linejoin="round"/></svg>
<svg viewBox="0 0 256 256" style="left:1369.0px;top:25.0px;width:22px;height:22px;color:#a3a9b8;"><circle cx="112" cy="112" r="80" fill="none" stroke="currentColor" stroke-width="24" stroke-linecap="round" stroke-linejoin="round"/><line x1="168.6" y1="168.6" x2="224" y2="224" fill="none" stroke="currentColor" stroke-width="24" stroke-linecap="round" stroke-linejoin="round"/><line x1="80" y1="112" x2="144" y2="112" fill="none" stroke="currentColor" stroke-width="24" stroke-linecap="round" stroke-linejoin="round"/></svg>
<div style="left:1403px;top:18px;width:114px;height:36px;border-radius:3.5px;border:1px solid #434956;"></div>
<div class="t" style="top:23.5px;height:26px;line-height:26px;font-size:18.5px;color:#f1f2f4;letter-spacing:0.656px;left:1417px;">33%</div>
<svg viewBox="0 0 256 256" style="left:1489.5px;top:27.5px;width:17px;height:17px;color:#bdc1cc;"><polyline points="208,96 128,176 48,96" fill="none" stroke="currentColor" stroke-width="16" stroke-linecap="round" stroke-linejoin="round"/></svg>
<svg viewBox="0 0 256 256" style="left:1528.0px;top:25.0px;width:22px;height:22px;color:#a3a9b8;"><circle cx="112" cy="112" r="80" fill="none" stroke="currentColor" stroke-width="24" stroke-linecap="round" stroke-linejoin="round"/><line x1="168.6" y1="168.6" x2="224" y2="224" fill="none" stroke="currentColor" stroke-width="24" stroke-linecap="round" stroke-linejoin="round"/><line x1="80" y1="112" x2="144" y2="112" fill="none" stroke="currentColor" stroke-width="24" stroke-linecap="round" stroke-linejoin="round"/><line x1="112" y1="80" x2="112" y2="144" fill="none" stroke="currentColor" stroke-width="24" stroke-linecap="round" stroke-linejoin="round"/></svg>
<svg viewBox="0 0 256 256" style="left:1573.5px;top:25.5px;width:21px;height:21px;color:#a3a9b8;"><polyline points="160,48 208,48 208,96" fill="none" stroke="currentColor" stroke-width="24" stroke-linecap="round" stroke-linejoin="round"/><line x1="152" y1="104" x2="208" y2="48" fill="none" stroke="currentColor" stroke-width="24" stroke-linecap="round" stroke-linejoin="round"/><polyline points="96,208 48,208 48,160" fill="none" stroke="currentColor" stroke-width="24" stroke-linecap="round" stroke-linejoin="round"/><line x1="104" y1="152" x2="48" y2="208" fill="none" stroke="currentColor" stroke-width="24" stroke-linecap="round" stroke-linejoin="round"/><polyline points="208,160 208,208 160,208" fill="none" stroke="currentColor" stroke-width="24" stroke-linecap="round" stroke-linejoin="round"/><line x1="152" y1="152" x2="208" y2="208" fill="none" stroke="currentColor" stroke-width="24" stroke-linecap="round" stroke-linejoin="round"/><polyline points="48,96 48,48 96,48" fill="none" stroke="currentColor" stroke-width="24" stroke-linecap="round" stroke-linejoin="round"/><line x1="104" y1="104" x2="48" y2="48" fill="none" stroke="currentColor" stroke-width="24" stroke-linecap="round" stroke-linejoin="round"/></svg>
<svg viewBox="0 0 256 256" style="left:1618.5px;top:25.5px;width:21px;height:21px;color:#a3a9b8;"><path d="M40,92 V48 a8,8 0 0 1 8,-8 H76 M112,40 H148 M184,40 H208 a8,8 0 0 1 8,8 V76 M216,112 V148 M216,184 V208 a8,8 0 0 1 -8,8 H168" fill="none" stroke="currentColor" stroke-width="24" stroke-linecap="round" stroke-linejoin="round"/><rect x="40" y="128" width="88" height="88" rx="6" fill="none" stroke="currentColor" stroke-width="24" stroke-linecap="round" stroke-linejoin="round"/></svg>
<div style="left:1661px;top:18px;width:1px;height:36px;background:#373c48;"></div>
<svg viewBox="0 0 256 256" style="left:1682.0px;top:25.0px;width:22px;height:22px;color:#a3a9b8;"><path d="M216,91 V208 a8,8 0 0 1 -8,8 H48 a8,8 0 0 1 -8,-8 V48 a8,8 0 0 1 8,-8 H165 a8,8 0 0 1 5.7,2.3 l43,43 a8,8 0 0 1 2.3,5.7 Z" fill="none" stroke="currentColor" stroke-width="24" stroke-linecap="round" stroke-linejoin="round"/><path d="M80,216 V152 a8,8 0 0 1 8,-8 h80 a8,8 0 0 1 8,8 v64" fill="none" stroke="currentColor" stroke-width="24" stroke-linecap="round" stroke-linejoin="round"/><line x1="152" y1="72" x2="96" y2="72" fill="none" stroke="currentColor" stroke-width="24" stroke-linecap="round" stroke-linejoin="round"/></svg>
<svg viewBox="0 0 256 256" style="left:1726.0px;top:25.0px;width:22px;height:22px;color:#a3a9b8;"><polyline points="24,56 24,104 72,104" fill="none" stroke="currentColor" stroke-width="24" stroke-linecap="round" stroke-linejoin="round"/><path d="M67.6,192 A88,88 0 1 0 65.8,65.8 L24,104" fill="none" stroke="currentColor" stroke-width="24" stroke-linecap="round" stroke-linejoin="round"/></svg>
<svg viewBox="0 0 256 256" style="left:1772.0px;top:25.0px;width:22px;height:22px;color:#596173;"><polyline points="232,56 232,104 184,104" fill="none" stroke="currentColor" stroke-width="24" stroke-linecap="round" stroke-linejoin="round"/><path d="M188.4,192 A88,88 0 1 1 190.2,65.8 L232,104" fill="none" stroke="currentColor" stroke-width="24" stroke-linecap="round" stroke-linejoin="round"/></svg>
<svg viewBox="0 0 256 256" style="left:1817.0px;top:25.0px;width:22px;height:22px;color:#a3a9b8;"><path d="M200,224 H56 a8,8 0 0 1 -8,-8 V40 a8,8 0 0 1 8,-8 h96 l56,56 V216 a8,8 0 0 1 -8,8 Z" fill="none" stroke="currentColor" stroke-width="24" stroke-linecap="round" stroke-linejoin="round"/><polyline points="152,32 152,88 208,88" fill="none" stroke="currentColor" stroke-width="24" stroke-linecap="round" stroke-linejoin="round"/><line x1="104" y1="152" x2="152" y2="152" fill="none" stroke="currentColor" stroke-width="24" stroke-linecap="round" stroke-linejoin="round"/><line x1="128" y1="128" x2="128" y2="176" fill="none" stroke="currentColor" stroke-width="24" stroke-linecap="round" stroke-linejoin="round"/></svg>
<svg viewBox="0 0 256 256" style="left:1861.0px;top:25.0px;width:22px;height:22px;color:#a3a9b8;"><path fill-rule="evenodd" fill="currentColor" d="M238.0,128.0 L237.7,135.2 L236.7,142.3 L234.1,149.1 L229.2,155.1 L222.1,159.9 L214.0,163.6 L206.9,166.9 L202.5,171.0 L201.1,176.9 L201.8,184.7 L202.7,193.5 L202.1,202.1 L199.3,209.3 L194.8,215.0 L189.1,219.4 L183.0,223.3 L176.6,226.6 L170.0,229.3 L162.8,230.5 L155.1,229.2 L147.4,225.4 L140.1,220.3 L133.8,215.8 L128.0,214.0 L122.2,215.8 L115.9,220.3 L108.6,225.4 L100.9,229.2 L93.2,230.5 L86.0,229.3 L79.4,226.6 L73.0,223.3 L66.9,219.4 L61.2,215.0 L56.7,209.3 L53.9,202.1 L53.3,193.5 L54.2,184.7 L54.9,176.9 L53.5,171.0 L49.1,166.9 L42.0,163.6 L33.9,159.9 L26.8,155.1 L21.9,149.1 L19.3,142.3 L18.3,135.2 L18.0,128.0 L18.3,120.8 L19.3,113.7 L21.9,106.9 L26.8,100.9 L33.9,96.1 L42.0,92.4 L49.1,89.1 L53.5,85.0 L54.9,79.1 L54.2,71.3 L53.3,62.5 L53.9,53.9 L56.7,46.7 L61.2,41.0 L66.9,36.6 L73.0,32.7 L79.4,29.4 L86.0,26.7 L93.2,25.5 L100.9,26.8 L108.6,30.6 L115.9,35.7 L122.2,40.2 L128.0,42.0 L133.8,40.2 L140.1,35.7 L147.4,30.6 L155.1,26.8 L162.8,25.5 L170.0,26.7 L176.6,29.4 L183.0,32.7 L189.1,36.6 L194.8,41.0 L199.3,46.7 L202.1,53.9 L202.7,62.5 L201.8,71.3 L201.1,79.1 L202.5,85.0 L206.9,89.1 L214.0,92.4 L222.1,96.1 L229.2,100.9 L234.1,106.9 L236.7,113.7 L237.7,120.8Z M128,90 a38,38 0 1 0 0.01,0Z"/></svg>
<div style="left:697px;top:63px;width:1199px;height:1359px;border-radius:5px;overflow:hidden;background:repeating-conic-gradient(#262932 0 25%,#1d2029 0 50%) 0 0/30px 30px;"></div>
<svg viewBox="0 0 1199 1359" style="left:697px;top:63px;width:1199px;height:1359px"><path d="M462.5,637.0 C462.6,582.5 462.4,480.3 462.5,437.0 C462.6,393.7 462.3,390.2 462.8,377.0 C463.3,363.8 464.0,362.7 465.5,357.5 C467.0,352.3 468.7,349.8 471.8,345.8 C474.8,341.7 479.3,336.8 484.0,333.0 C488.7,329.2 494.8,325.5 500.0,323.0 C505.2,320.5 511.1,319.0 515.5,318.0 C519.9,317.0 522.2,316.8 526.4,317.0 C530.6,317.2 535.6,317.8 540.5,319.5 C545.4,321.2 551.3,324.2 556.0,327.0 C560.7,329.8 565.2,333.7 568.6,336.4 C572.0,339.1 576.4,343.4 576.4,343.4 C576.4,343.4 583.8,344.8 587.4,345.8 C591.1,346.7 594.7,347.4 598.3,348.9 C601.9,350.4 605.8,352.7 609.0,355.0 C612.2,357.3 617.8,362.6 617.8,362.6 C617.8,362.6 619.3,357.5 621.0,353.6 C622.7,349.8 624.8,344.4 628.0,339.5 C631.2,334.6 635.8,328.7 640.5,323.9 C645.2,319.1 650.3,314.6 656.0,310.6 C661.7,306.6 668.9,302.4 674.9,299.7 C680.9,297.0 687.1,295.6 692.0,294.5 C696.9,293.4 699.9,293.2 704.6,293.4 C709.3,293.5 714.3,293.8 720.0,295.4 C725.7,297.0 733.0,299.6 739.0,302.8 C745.0,306.0 751.1,310.2 756.0,314.5 C760.9,318.8 764.9,323.4 768.6,328.6 C772.3,333.8 775.8,339.8 778.0,345.8 C780.2,351.7 781.1,357.7 782.0,364.5 C782.9,371.3 783.2,375.0 783.5,386.4 C783.8,397.8 783.2,420.0 783.5,433.0 C783.8,446.0 784.7,453.0 785.0,464.5 C785.3,476.0 785.4,486.1 785.5,502.0 C785.6,517.9 785.9,543.3 785.5,560.0 C785.1,576.7 784.5,588.0 783.0,602.0 C781.5,616.0 779.2,629.9 776.8,643.7 C774.3,657.5 771.0,673.5 768.4,685.0 C765.8,696.5 761.3,712.4 761.3,712.4 C761.3,712.4 763.0,735.1 764.0,748.0 C765.0,760.9 766.5,775.7 767.6,789.5 C768.7,803.3 769.5,817.1 770.5,831.0 C771.5,844.9 772.9,859.1 773.4,873.0 C774.0,886.9 773.9,900.7 773.8,914.5 C773.7,928.3 773.7,942.1 773.0,956.0 C772.3,969.9 771.5,986.5 769.7,998.0 C767.9,1009.5 766.0,1016.7 762.0,1025.0 C758.0,1033.3 754.3,1041.4 746.0,1048.0 C737.7,1054.6 722.5,1060.6 712.0,1064.5 C701.5,1068.4 692.0,1070.0 683.0,1071.5 C674.0,1073.0 665.2,1073.4 658.0,1073.5 C650.8,1073.6 647.0,1073.8 640.0,1072.0 C633.0,1070.2 622.5,1066.5 615.7,1063.0 C608.9,1059.5 604.2,1055.5 599.4,1050.8 C594.6,1046.0 589.9,1039.0 587.0,1034.5 C584.1,1030.0 582.0,1024.0 582.0,1024.0 C582.0,1024.0 580.0,1028.8 580.0,1028.8 C580.0,1028.8 475.5,1052.0 475.5,1052.0 C475.5,1052.0 466.1,1038.8 463.0,1032.5 C459.9,1026.2 458.3,1021.5 457.0,1014.0 C455.7,1006.5 455.2,1000.6 455.0,987.8 C454.8,975.0 455.8,946.6 456.0,937.0 C456.2,927.4 455.7,951.7 456.0,930.0 C456.3,908.3 457.0,834.7 458.0,807.0 C459.0,779.3 461.2,792.3 462.0,764.0 C462.8,735.7 462.4,691.5 462.5,637.0Z" fill="#fbe04a" opacity="0.5"/><path d="M214.0,407.0 C214.7,398.7 216.0,390.7 218.0,384.0 C220.0,377.3 222.3,372.0 226.0,367.0 C229.7,362.0 235.0,357.3 240.0,354.0 C245.0,350.7 250.2,348.5 256.0,347.0 C261.8,345.5 268.5,344.7 275.0,344.8 C281.5,344.9 288.8,345.8 295.0,347.5 C301.2,349.2 312.4,354.8 312.4,354.8 C312.4,354.8 338.0,348.0 338.0,348.0 C338.0,348.0 351.0,354.0 351.0,354.0 C351.0,354.0 374.3,343.3 383.0,342.0 C391.7,340.7 397.8,344.8 403.0,346.0 C408.2,347.2 411.0,348.0 414.0,349.2 C417.0,350.4 421.0,353.0 421.0,353.0 C421.0,353.0 424.5,351.4 428.0,351.2 C431.5,351.0 437.6,351.2 442.0,351.7 C446.4,352.2 450.7,353.2 454.6,354.3 C458.5,355.4 461.9,356.1 465.5,358.0 C469.1,359.9 472.2,362.3 476.4,366.0 C480.6,369.7 486.3,375.3 490.5,380.0 C494.7,384.7 498.3,389.3 501.4,394.0 C504.5,398.7 507.1,403.5 509.0,408.0 C510.9,412.5 512.0,416.6 513.0,420.8 C514.0,424.9 514.3,428.8 514.7,433.0 C515.1,437.2 515.0,440.5 515.5,445.8 C516.0,451.0 517.0,458.3 517.8,464.5 C518.5,470.7 519.2,476.8 520.0,483.0 C520.8,489.2 521.9,493.0 522.5,502.0 C523.1,511.0 523.3,526.2 523.5,537.0 C523.7,547.8 523.1,556.5 523.5,567.0 C523.9,577.5 525.4,570.0 526.0,600.0 C526.6,630.0 526.8,699.2 527.0,747.0 C527.2,794.8 527.0,855.3 527.0,887.0 C527.0,918.7 526.8,921.9 526.7,937.0 C526.6,952.1 526.8,967.4 526.3,977.6 C525.8,987.8 525.4,991.9 524.0,998.0 C522.6,1004.1 520.7,1008.9 518.0,1014.0 C515.3,1019.1 511.7,1024.0 508.0,1028.4 C504.3,1032.8 499.9,1037.2 495.8,1040.6 C491.7,1044.0 487.0,1046.8 483.6,1048.7 C480.2,1050.6 478.6,1051.5 475.5,1052.0 C472.4,1052.5 469.0,1052.2 465.3,1052.0 C461.5,1051.8 457.1,1051.6 453.0,1051.0 C448.9,1050.4 444.4,1049.3 441.0,1048.3 C437.6,1047.2 432.8,1044.7 432.8,1044.7 C432.8,1044.7 425.8,1048.7 420.7,1050.8 C415.6,1052.8 409.9,1054.6 402.4,1056.8 C395.0,1059.0 385.5,1061.8 376.0,1064.0 C366.5,1066.2 355.7,1068.4 345.5,1070.0 C335.3,1071.6 324.5,1072.8 315.0,1073.5 C305.5,1074.2 297.1,1074.1 288.6,1074.0 C280.1,1073.9 271.4,1073.5 264.2,1072.7 C257.1,1071.9 251.8,1071.0 246.0,1069.0 C240.2,1067.0 234.5,1064.0 229.7,1061.0 C225.0,1058.0 221.1,1054.8 217.5,1050.8 C213.9,1046.7 210.8,1041.2 208.4,1036.5 C206.0,1031.8 204.4,1026.7 203.3,1022.3 C202.2,1017.9 201.8,1014.0 201.7,1010.0 C201.6,1006.0 201.8,1002.4 202.7,998.0 C203.7,993.6 205.4,988.1 207.4,983.7 C209.4,979.3 214.5,971.5 214.5,971.5 C214.5,971.5 214.1,969.2 213.9,963.4 C213.7,957.7 213.7,945.2 213.5,937.0 C213.3,928.8 213.0,926.2 213.0,914.0 C213.0,901.8 213.2,878.0 213.7,864.0 C214.2,850.0 215.1,841.2 216.0,830.0 C216.9,818.8 218.3,813.7 219.0,797.0 C219.7,780.3 219.8,746.7 220.0,730.0 C220.2,713.3 219.8,707.5 220.0,697.0 C220.2,686.5 220.4,674.8 221.0,667.0 C221.6,659.2 223.0,656.7 223.7,650.0 C224.4,643.3 225.1,640.8 225.0,627.0 C224.9,613.2 224.2,588.2 223.0,567.0 C221.8,545.8 219.2,516.7 218.0,500.0 C216.8,483.3 216.4,478.0 215.7,467.0 C215.0,456.0 214.3,444.0 214.0,434.0 C213.7,424.0 213.3,415.3 214.0,407.0Z" fill="#e09464" opacity="0.5"/><rect x="228" y="357" width="500" height="665" fill="none" stroke="rgba(24,24,26,0.7)" stroke-width="2"/><rect x="228" y="357" width="500" height="665" fill="none" stroke="#c6c9d5" stroke-width="2" stroke-dasharray="7.5 7.5" stroke-dashoffset="1"/></svg>
<div style="left:702px;top:68px;width:288px;height:76px;background:rgba(20,21,26,0.55);border-radius:5px;"></div>
<div class="t" style="top:77.0px;height:27px;line-height:27px;font-size:19px;color:#979eaf;letter-spacing:-0.019px;left:795.5px;">Bbox:</div>
<div class="t" style="top:108.0px;height:27px;line-height:27px;font-size:19px;color:#979eaf;letter-spacing:-0.081px;left:733px;">Scaled Bbox:</div>
<div class="t" style="top:77.0px;height:27px;line-height:27px;font-size:19px;color:#979eaf;-webkit-text-stroke:0.57px currentColor;letter-spacing:0.251px;left:857px;">1008×1344 px</div>
<div class="t" style="top:108.0px;height:27px;line-height:27px;font-size:19px;color:#979eaf;-webkit-text-stroke:0.57px currentColor;letter-spacing:0.251px;left:857px;">1008×1344 px</div>
<div style="left:1846px;top:68px;width:45px;height:45px;background:#8991a4;border-radius:5px;"></div>
<svg viewBox="0 0 256 256" style="left:1856.0px;top:78.0px;width:25px;height:25px;color:#16181d;"><circle cx="128" cy="60" r="24" fill="currentColor" stroke="none"/><circle cx="128" cy="128" r="24" fill="currentColor" stroke="none"/><circle cx="128" cy="196" r="24" fill="currentColor" stroke="none"/></svg>
<div style="left:706px;top:450px;width:45px;height:315px;background:#8991a4;border-radius:5px;"></div>
<div style="left:706px;top:450px;width:45px;height:45px;background:#47b1e6;border-radius:5px 5px 0 0;"></div>
<svg viewBox="0 0 256 256" style="left:718.0px;top:462.0px;width:21px;height:21px;color:#16181d;"><path d="M224,32 C180,40 120,100 104,140 a44,44 0 0 1 36,36 C170,160 216,76 224,32 Z" fill="none" stroke="currentColor" stroke-width="24" stroke-linecap="round" stroke-linejoin="round"/><path d="M104,140 C60,130 40,170 44,196 C36,210 24,216 16,216 C40,228 100,232 128,204 C140,192 142,180 140,176" fill="none" stroke="currentColor" stroke-width="24" stroke-linecap="round" stroke-linejoin="round"/></svg>
<svg viewBox="0 0 256 256" style="left:718.0px;top:507.0px;width:21px;height:21px;color:#16181d;"><path d="M92,216 L36,160 a12,12 0 0 1 0,-17 L136,43 a12,12 0 0 1 17,0 l60,60 a12,12 0 0 1 0,17 L117,216 Z" fill="none" stroke="currentColor" stroke-width="24" stroke-linecap="round" stroke-linejoin="round"/><line x1="92" y1="216" x2="216" y2="216" fill="none" stroke="currentColor" stroke-width="24" stroke-linecap="round" stroke-linejoin="round"/><line x1="84" y1="95" x2="161" y2="172" fill="none" stroke="currentColor" stroke-width="24" stroke-linecap="round" stroke-linejoin="round"/></svg>
<svg viewBox="0 0 256 256" style="left:718.0px;top:552.0px;width:21px;height:21px;color:#16181d;"><rect x="32" y="48" width="192" height="160" rx="8" fill="none" stroke="currentColor" stroke-width="24" stroke-linecap="round" stroke-linejoin="round"/></svg>
<svg viewBox="0 0 256 256" style="left:718.0px;top:597.0px;width:21px;height:21px;color:#16181d;"><path d="M107,220 L43,52 a8,8 0 0 1 10,-10 L220,107 a8,8 0 0 1 -0.5,15 L150,146 a8,8 0 0 0 -5,5 L122,220 a8,8 0 0 1 -15,0 Z" fill="none" stroke="currentColor" stroke-width="24" stroke-linecap="round" stroke-linejoin="round"/><line x1="144" y1="144" x2="208" y2="208" fill="none" stroke="currentColor" stroke-width="24" stroke-linecap="round" stroke-linejoin="round"/></svg>
<svg viewBox="0 0 256 256" style="left:718.0px;top:642.0px;width:21px;height:21px;color:#16181d;"><path d="M64,216 C40,180 36,150 36,132 a20,20 0 0 1 40,0 V68 a20,20 0 0 1 40,0 V44 a20,20 0 0 1 40,0 V68 a20,20 0 0 1 40,0 v76 c0,60 -40,88 -72,88 s-48,-16 -60,-32" fill="none" stroke="currentColor" stroke-width="24" stroke-linecap="round" stroke-linejoin="round"/><line x1="116" y1="68" x2="116" y2="124" fill="none" stroke="currentColor" stroke-width="24" stroke-linecap="round" stroke-linejoin="round"/><line x1="156" y1="68" x2="156" y2="124" fill="none" stroke="currentColor" stroke-width="24" stroke-linecap="round" stroke-linejoin="round"/><line x1="76" y1="132" x2="76" y2="148" fill="none" stroke="currentColor" stroke-width="24" stroke-linecap="round" stroke-linejoin="round"/></svg>
<svg viewBox="0 0 256 256" style="left:718.0px;top:687.0px;width:21px;height:21px;color:#16181d;"><rect x="36" y="36" width="40" height="40" rx="6" fill="none" stroke="currentColor" stroke-width="24" stroke-linecap="round" stroke-linejoin="round"/><rect x="180" y="36" width="40" height="40" rx="6" fill="none" stroke="currentColor" stroke-width="24" stroke-linecap="round" stroke-linejoin="round"/><rect x="36" y="180" width="40" height="40" rx="6" fill="none" stroke="currentColor" stroke-width="24" stroke-linecap="round" stroke-linejoin="round"/><rect x="180" y="180" width="40" height="40" rx="6" fill="none" stroke="currentColor" stroke-width="24" stroke-linecap="round" stroke-linejoin="round"/><line x1="76" y1="56" x2="180" y2="56" fill="none" stroke="currentColor" stroke-width="24" stroke-linecap="round" stroke-linejoin="round"/><line x1="76" y1="200" x2="180" y2="200" fill="none" stroke="currentColor" stroke-width="24" stroke-linecap="round" stroke-linejoin="round"/><line x1="56" y1="76" x2="56" y2="180" fill="none" stroke="currentColor" stroke-width="24" stroke-linecap="round" stroke-linejoin="round"/><line x1="200" y1="76" x2="200" y2="180" fill="none" stroke="currentColor" stroke-width="24" stroke-linecap="round" stroke-linejoin="round"/></svg>
<svg viewBox="0 0 256 256" style="left:718.0px;top:732.0px;width:21px;height:21px;color:#16181d;"><path d="M180,108 L108,180 C90,198 60,190 48,216 a10,10 0 0 1 -8,-8 C66,196 58,166 76,148 L148,76" fill="none" stroke="currentColor" stroke-width="24" stroke-linecap="round" stroke-linejoin="round"/><path d="M132,60 l64,64" fill="none" stroke="currentColor" stroke-width="24" stroke-linecap="round" stroke-linejoin="round"/><path d="M152,80 L186,46 a32,32 0 0 1 44,44 l-0,0 L176,104" fill="none" stroke="currentColor" stroke-width="24" stroke-linecap="round" stroke-linejoin="round" /></svg>
<div style="left:706px;top:774px;width:45px;height:216px;background:#8991a4;border-radius:5px;"></div>
<div style="left:706px;top:828px;width:45px;height:54px;background:#ddf50a;"></div>
<div style="left:706px;top:882px;width:45px;height:108px;background:#596173;border-radius:0 0 5px 5px;"></div>
<svg viewBox="0 0 256 256" style="left:718.0px;top:790.5px;width:21px;height:21px;color:#16181d;"><line x1="40" y1="88" x2="80" y2="88" fill="none" stroke="currentColor" stroke-width="24" stroke-linecap="round" stroke-linejoin="round"/><line x1="128" y1="88" x2="216" y2="88" fill="none" stroke="currentColor" stroke-width="24" stroke-linecap="round" stroke-linejoin="round"/><circle cx="104" cy="88" r="24" fill="none" stroke="currentColor" stroke-width="24" stroke-linecap="round" stroke-linejoin="round"/><line x1="40" y1="168" x2="136" y2="168" fill="none" stroke="currentColor" stroke-width="24" stroke-linecap="round" stroke-linejoin="round"/><line x1="184" y1="168" x2="216" y2="168" fill="none" stroke="currentColor" stroke-width="24" stroke-linecap="round" stroke-linejoin="round"/><circle cx="160" cy="168" r="24" fill="none" stroke="currentColor" stroke-width="24" stroke-linecap="round" stroke-linejoin="round"/></svg>
<svg viewBox="0 0 256 256" style="left:717.5px;top:844.0px;width:22px;height:22px;color:#16181d;"><path fill="currentColor" stroke="none" d="M208,144a15.78,15.78,0,0,1-10.42,14.94L146,178l-19,51.62a15.92,15.92,0,0,1-29.88,0L78,178l-51.62-19a15.92,15.92,0,0,1,0-29.88L78,110l19-51.62a15.92,15.92,0,0,1,29.88,0L146,110l51.62,19A15.78,15.78,0,0,1,208,144ZM152,48h16V64a8,8,0,0,0,16,0V48h16a8,8,0,0,0,0-16H184V16a8,8,0,0,0-16,0V32H152a8,8,0,0,0,0,16Zm88,32h-8V72a8,8,0,0,0-16,0v8h-8a8,8,0,0,0,0,16h8v8a8,8,0,0,0,16,0V96h8a8,8,0,0,0,0-16Z"/></svg>
<svg viewBox="0 0 256 256" style="left:718.5px;top:899.0px;width:20px;height:20px;color:#373c48;"><line x1="200" y1="56" x2="56" y2="200" fill="none" stroke="currentColor" stroke-width="24" stroke-linecap="round" stroke-linejoin="round"/><line x1="200" y1="200" x2="56" y2="56" fill="none" stroke="currentColor" stroke-width="24" stroke-linecap="round" stroke-linejoin="round"/></svg>
<svg viewBox="0 0 256 256" style="left:718.5px;top:952.0px;width:20px;height:20px;color:#373c48;"><line x1="216" y1="60" x2="40" y2="60" fill="none" stroke="currentColor" stroke-width="24" stroke-linecap="round" stroke-linejoin="round"/><line x1="88" y1="20" x2="168" y2="20" fill="none" stroke="currentColor" stroke-width="24" stroke-linecap="round" stroke-linejoin="round"/><path d="M200,60 V208 a8,8 0 0 1 -8,8 H64 a8,8 0 0 1 -8,-8 V60" fill="none" stroke="currentColor" stroke-width="24" stroke-linecap="round" stroke-linejoin="round"/></svg>
<div style="left:1842px;top:612px;width:45px;height:215px;background:#8991a4;border-radius:5px;"></div>
<svg viewBox="0 0 256 256" style="left:1855.0px;top:710.5px;width:19px;height:19px;color:#16181d;"><rect x="64" y="40" width="160" height="136" rx="8" fill="none" stroke="currentColor" stroke-width="24" stroke-linecap="round" stroke-linejoin="round"/><circle cx="172" cy="84" r="12" fill="currentColor" stroke="none"/><path d="M64,150 l46,-46 a8,8 0 0 1 11,0 L193,176" fill="none" stroke="currentColor" stroke-width="24" stroke-linecap="round" stroke-linejoin="round"/><path d="M192,176 v32 a8,8 0 0 1 -8,8 H40 a8,8 0 0 1 -8,-8 V88 a8,8 0 0 1 8,-8 H64" fill="none" stroke="currentColor" stroke-width="24" stroke-linecap="round" stroke-linejoin="round"/></svg>
<div style="left:1914px;top:64px;width:628px;height:1px;background:#373c48;"></div>
<div style="left:1914px;top:18px;width:144px;height:47px;background:#16181d;border-radius:8px 8px 0 0;border:1px solid #373c48;border-bottom:none;"></div>
<div class="t" style="top:28.5px;height:25px;line-height:25px;font-size:18px;color:#6fc2eb;font-weight:700;-webkit-text-stroke:0.3px currentColor;left:1953.50px;">图层 (2)</div>
<div class="t" style="top:29.5px;height:25px;line-height:25px;font-size:18px;color:#a3a9b8;font-weight:700;-webkit-text-stroke:0.3px currentColor;left:2111.00px;">画廊</div>
<div class="t" style="top:28.5px;height:25px;line-height:25px;font-size:18px;color:#bdc1cc;font-weight:700;-webkit-text-stroke:0.3px currentColor;letter-spacing:0.200px;left:2438px;">打开查看器</div>
<div class="t" style="top:82.5px;height:25px;line-height:25px;font-size:18px;color:#b1b7c3;font-weight:700;-webkit-text-stroke:0.3px currentColor;left:1918px;">透明度</div>
<div style="left:1981px;top:77px;width:114px;height:36px;border-radius:3.5px;border:1px solid #434956;"></div>
<div class="t" style="top:82.0px;height:26px;line-height:26px;font-size:18.5px;color:#f1f2f4;letter-spacing:0.656px;left:1996px;">50%</div>
<svg viewBox="0 0 256 256" style="left:2068.5px;top:86.5px;width:17px;height:17px;color:#bdc1cc;"><polyline points="208,96 128,176 48,96" fill="none" stroke="currentColor" stroke-width="16" stroke-linecap="round" stroke-linejoin="round"/></svg>
<div style="left:2394px;top:82px;width:26px;height:26px;background:#fbe04a;border-radius:13px;border:3px solid #596173;"></div>
<svg viewBox="0 0 256 256" style="left:2441.5px;top:85.0px;width:20px;height:20px;color:#a3a9b8;"><rect x="32" y="48" width="192" height="160" rx="8" fill="none" stroke="currentColor" stroke-width="24" stroke-linecap="round" stroke-linejoin="round"/><polyline points="160,88 192,88 192,120" fill="none" stroke="currentColor" stroke-width="24" stroke-linecap="round" stroke-linejoin="round"/><polyline points="96,168 64,168 64,136" fill="none" stroke="currentColor" stroke-width="24" stroke-linecap="round" stroke-linejoin="round"/></svg>
<svg viewBox="0 0 256 256" style="left:2477.5px;top:85.0px;width:20px;height:20px;color:#a3a9b8;"><path fill="currentColor" stroke="none" d="M160,80 H40 a8,8 0 0 0 -8,8 V216 a8,8 0 0 0 8,8 H160 a8,8 0 0 0 8,-8 V88 a8,8 0 0 0 -8,-8 Z"/><path d="M88,44 H212 V168 H188" fill="none" stroke="currentColor" stroke-width="16" stroke-linejoin="round" stroke-linecap="round"/></svg>
<svg viewBox="0 0 256 256" style="left:2513.5px;top:85.0px;width:20px;height:20px;color:#a3a9b8;"><line x1="40" y1="128" x2="216" y2="128" fill="none" stroke="currentColor" stroke-width="24" stroke-linecap="round" stroke-linejoin="round"/><line x1="128" y1="40" x2="128" y2="216" fill="none" stroke="currentColor" stroke-width="24" stroke-linecap="round" stroke-linejoin="round"/></svg>
<div style="left:1914px;top:122px;width:628px;height:1px;background:#373c48;"></div>
<div class="t" style="top:137.5px;height:25px;line-height:25px;font-size:18px;color:#4e5565;font-weight:700;-webkit-text-stroke:0.3px currentColor;left:1918px;">去噪强度</div>
<div style="left:2376px;top:138px;width:162px;height:23px;background:#7d8392;border-radius:3px;"></div>
<div class="t" style="top:140.0px;height:20px;line-height:20px;font-size:14px;color:#16181d;font-weight:500;left:2385px;">已禁用（无栅格内容）</div>
<div style="left:1914px;top:177px;width:628px;height:1px;background:#373c48;"></div>
<svg viewBox="0 0 256 256" style="left:1914.5px;top:196.5px;width:17px;height:17px;color:#6f7990;"><polyline points="208,96 128,176 48,96" fill="none" stroke="currentColor" stroke-width="24" stroke-linecap="round" stroke-linejoin="round"/></svg>
<div class="t" style="top:193.0px;height:25px;line-height:25px;font-size:18px;color:#596173;font-weight:700;-webkit-text-stroke:0.3px currentColor;letter-spacing:-0.500px;left:1945px;">修复遮罩（1 个）</div>
<svg viewBox="0 0 256 256" style="left:2442.0px;top:195.5px;width:19px;height:19px;color:#596173;"><polyline points="32,176 128,232 224,176" fill="none" stroke="currentColor" stroke-width="24" stroke-linecap="round" stroke-linejoin="round"/><polyline points="32,128 128,184 224,128" fill="none" stroke="currentColor" stroke-width="24" stroke-linecap="round" stroke-linejoin="round"/><polygon points="32,80 128,136 224,80 128,24" fill="none" stroke="currentColor" stroke-width="24" stroke-linecap="round" stroke-linejoin="round"/></svg>
<svg viewBox="0 0 256 256" style="left:2477.75px;top:195.25px;width:19.5px;height:19.5px;color:#b1b7c3;"><path d="M128,56 C48,56 16,128 16,128 s32,72 112,72 s112,-72 112,-72 S208,56 128,56 Z" fill="none" stroke="currentColor" stroke-width="24" stroke-linecap="round" stroke-linejoin="round"/><circle cx="128" cy="128" r="36" fill="none" stroke="currentColor" stroke-width="24" stroke-linecap="round" stroke-linejoin="round"/></svg>
<svg viewBox="0 0 256 256" style="left:2514.0px;top:195.5px;width:19px;height:19px;color:#b1b7c3;"><rect x="48" y="30" width="160" height="196" rx="10" fill="currentColor" fill-opacity="0.62" stroke="currentColor" stroke-width="20"/><path d="M84,100 V66 H114 M142,66 H172 V100 M172,156 V190 H142 M114,190 H84 V156" fill="none" stroke="#1b1d24" stroke-opacity="0.8" stroke-width="11"/></svg>
<svg viewBox="0 0 256 256" style="left:1914.5px;top:322.5px;width:17px;height:17px;color:#a3a9b8;"><polyline points="208,96 128,176 48,96" fill="none" stroke="currentColor" stroke-width="24" stroke-linecap="round" stroke-linejoin="round"/></svg>
<div class="t" style="top:319.0px;height:25px;line-height:25px;font-size:18px;color:#bdc1cc;font-weight:700;-webkit-text-stroke:0.3px currentColor;letter-spacing:-0.500px;left:1945px;">区域引导（2 个）</div>
<svg viewBox="0 0 256 256" style="left:2442.0px;top:321.5px;width:19px;height:19px;color:#b1b7c3;"><polyline points="32,176 128,232 224,176" fill="none" stroke="currentColor" stroke-width="24" stroke-linecap="round" stroke-linejoin="round"/><polyline points="32,128 128,184 224,128" fill="none" stroke="currentColor" stroke-width="24" stroke-linecap="round" stroke-linejoin="round"/><polygon points="32,80 128,136 224,80 128,24" fill="none" stroke="currentColor" stroke-width="24" stroke-linecap="round" stroke-linejoin="round"/></svg>
<svg viewBox="0 0 256 256" style="left:2477.75px;top:321.25px;width:19.5px;height:19.5px;color:#b1b7c3;"><path d="M128,56 C48,56 16,128 16,128 s32,72 112,72 s112,-72 112,-72 S208,56 128,56 Z" fill="none" stroke="currentColor" stroke-width="24" stroke-linecap="round" stroke-linejoin="round"/><circle cx="128" cy="128" r="36" fill="none" stroke="currentColor" stroke-width="24" stroke-linecap="round" stroke-linejoin="round"/></svg>
<svg viewBox="0 0 256 256" style="left:2514.0px;top:321.5px;width:19px;height:19px;color:#b1b7c3;"><rect x="48" y="30" width="160" height="196" rx="10" fill="currentColor" fill-opacity="0.62" stroke="currentColor" stroke-width="20"/><path d="M84,100 V66 H114 M142,66 H172 V100 M172,156 V190 H142 M114,190 H84 V156" fill="none" stroke="#1b1d24" stroke-opacity="0.8" stroke-width="11"/></svg>
<div style="left:1914px;top:232px;width:628px;height:72px;background:#21242b;border-radius:8px;"></div>
<div style="left:1923px;top:241px;width:54px;height:54px;border-radius:3px;border:1px solid #373c48;overflow:hidden;background:repeating-conic-gradient(#2a2d37 0 25%,#20232c 0 50%) 0 0/7.5px 7.5px;"></div>
<div class="t" style="top:256.2px;height:25px;line-height:25px;font-size:18px;color:#a3a9b8;font-weight:700;-webkit-text-stroke:0.3px currentColor;letter-spacing:-0.250px;left:1986px;">修复遮罩</div>
<svg viewBox="0 0 256 256" style="left:2397.5px;top:259.0px;width:18px;height:18px;color:#a3a9b8;"><path d="M192,224 l-64,-40 l-64,40 V48 a8,8 0 0 1 8,-8 H184 a8,8 0 0 1 8,8 Z" fill="currentColor" stroke="currentColor" stroke-width="16" stroke-linejoin="round"/></svg>
<svg viewBox="0 0 256 256" style="left:2433.5px;top:258.5px;width:18px;height:18px;color:#a3a9b8;"><rect x="40" y="96" width="176" height="120" rx="8" fill="none" stroke="currentColor" stroke-width="24" stroke-linecap="round" stroke-linejoin="round"/><path d="M88,96 V60 a40,40 0 0 1 80,0" fill="none" stroke="currentColor" stroke-width="24" stroke-linecap="round" stroke-linejoin="round"/></svg>
<svg viewBox="0 0 256 256" style="left:2469.5px;top:259.0px;width:18px;height:18px;color:#a3a9b8;"><circle cx="128" cy="128" r="104" fill="currentColor" stroke="none"/></svg>
<svg viewBox="0 0 256 256" style="left:2505.5px;top:259.0px;width:18px;height:18px;color:#c4605f;"><path fill="currentColor" stroke="none" d="M224,56 a8,8 0 0 1 -8,8 h-8 V208 a16,16 0 0 1 -16,16 H64 a16,16 0 0 1 -16,-16 V64 H40 a8,8 0 0 1 0,-16 H216 A8,8 0 0 1 224,56 Z M88,32 h80 a8,8 0 0 0 0,-16 H88 a8,8 0 0 0 0,16 Z"/></svg>
<div style="left:1914px;top:358px;width:628px;height:376px;background:#21242b;border-radius:8px;"></div>
<div style="left:1923px;top:367px;width:54px;height:54px;border-radius:3px;border:1px solid #373c48;overflow:hidden;background:repeating-conic-gradient(#2a2d37 0 25%,#20232c 0 50%) 0 0/7.5px 7.5px;"></div>
<svg viewBox="0 0 54 54" style="left:1923px;top:367px;width:54px;height:54px"><path d="M16,6 C16,2.5 18,1 21,1 L33,1 C36,1 38,4 38.3,8 L38.3,47 C38.3,50 36,51.5 33,52 C30,52.5 26,53 22,53 C17,53 15,50 15,46 L15.3,30 L16,24 Z" fill="#dc9266"/></svg>
<div class="t" style="top:382.2px;height:25px;line-height:25px;font-size:18px;color:#a3a9b8;font-weight:700;-webkit-text-stroke:0.3px currentColor;letter-spacing:-0.250px;left:1986px;">区域导向</div>
<svg viewBox="0 0 256 256" style="left:2397.5px;top:385.0px;width:18px;height:18px;color:#a3a9b8;"><path d="M192,224 l-64,-40 l-64,40 V48 a8,8 0 0 1 8,-8 H184 a8,8 0 0 1 8,8 Z" fill="none" stroke="currentColor" stroke-width="24" stroke-linecap="round" stroke-linejoin="round"/></svg>
<svg viewBox="0 0 256 256" style="left:2433.5px;top:384.5px;width:18px;height:18px;color:#a3a9b8;"><rect x="40" y="96" width="176" height="120" rx="8" fill="none" stroke="currentColor" stroke-width="24" stroke-linecap="round" stroke-linejoin="round"/><path d="M88,96 V60 a40,40 0 0 1 80,0" fill="none" stroke="currentColor" stroke-width="24" stroke-linecap="round" stroke-linejoin="round"/></svg>
<svg viewBox="0 0 256 256" style="left:2469.5px;top:385.0px;width:18px;height:18px;color:#a3a9b8;"><circle cx="128" cy="128" r="104" fill="currentColor" stroke="none"/></svg>
<svg viewBox="0 0 256 256" style="left:2505.5px;top:385.0px;width:18px;height:18px;color:#c4605f;"><path fill="currentColor" stroke="none" d="M224,56 a8,8 0 0 1 -8,8 h-8 V208 a16,16 0 0 1 -16,16 H64 a16,16 0 0 1 -16,-16 V64 H40 a8,8 0 0 1 0,-16 H216 A8,8 0 0 1 224,56 Z M88,32 h80 a8,8 0 0 0 0,-16 H88 a8,8 0 0 0 0,16 Z"/></svg>
<div style="left:1914px;top:743px;width:628px;height:275px;background:#2c303a;border-radius:8px;"></div>
<div style="left:1923px;top:752px;width:54px;height:54px;border-radius:3px;border:1px solid #373c48;overflow:hidden;background:repeating-conic-gradient(#2a2d37 0 25%,#20232c 0 50%) 0 0/7.5px 7.5px;"></div>
<svg viewBox="0 0 54 54" style="left:1923px;top:752px;width:54px;height:54px"><path d="M16,8 C16,4 19,3 22,3 C24,3 25,5 26,4.5 C27,3 29,0.8 32,0.8 C36,0.8 38,4 38,8 L38,22 C37,30 36.5,40 36.5,48 C36.5,52 33,53 30,53 C27,53 26,50.5 24.5,50 C23,50.5 19,52.5 17.5,52 C16,51.5 16,48 16,46 Z" fill="#fbe24f"/></svg>
<div class="t" style="top:767.2px;height:25px;line-height:25px;font-size:18px;color:#d7d9e0;font-weight:700;-webkit-text-stroke:0.3px currentColor;letter-spacing:-0.250px;left:1986px;">区域导向</div>
<svg viewBox="0 0 256 256" style="left:2397.5px;top:770.0px;width:18px;height:18px;color:#a3a9b8;"><path d="M192,224 l-64,-40 l-64,40 V48 a8,8 0 0 1 8,-8 H184 a8,8 0 0 1 8,8 Z" fill="none" stroke="currentColor" stroke-width="24" stroke-linecap="round" stroke-linejoin="round"/></svg>
<svg viewBox="0 0 256 256" style="left:2433.5px;top:769.5px;width:18px;height:18px;color:#a3a9b8;"><rect x="40" y="96" width="176" height="120" rx="8" fill="none" stroke="currentColor" stroke-width="24" stroke-linecap="round" stroke-linejoin="round"/><path d="M88,96 V60 a40,40 0 0 1 80,0" fill="none" stroke="currentColor" stroke-width="24" stroke-linecap="round" stroke-linejoin="round"/></svg>
<svg viewBox="0 0 256 256" style="left:2469.5px;top:770.0px;width:18px;height:18px;color:#a3a9b8;"><circle cx="128" cy="128" r="104" fill="currentColor" stroke="none"/></svg>
<svg viewBox="0 0 256 256" style="left:2505.5px;top:770.0px;width:18px;height:18px;color:#c4605f;"><path fill="currentColor" stroke="none" d="M224,56 a8,8 0 0 1 -8,8 h-8 V208 a16,16 0 0 1 -16,16 H64 a16,16 0 0 1 -16,-16 V64 H40 a8,8 0 0 1 0,-16 H216 A8,8 0 0 1 224,56 Z M88,32 h80 a8,8 0 0 0 0,-16 H88 a8,8 0 0 0 0,16 Z"/></svg>
<div style="left:1923px;top:430px;width:610px;height:295px;border-radius:6px;border:1px solid #434956;"></div>
<div class="t" style="top:439.0px;height:31px;line-height:31px;font-size:22px;color:#d7d9e0;letter-spacing:0.590px;left:1933px;">cute,cherry blossoms,hair flower,pink flower,hair</div>
<div class="t" style="top:468.75px;height:31px;line-height:31px;font-size:22px;color:#d7d9e0;letter-spacing:0.499px;left:1933px;">ribbon,cat ears,animal ear fluff,grey hair,short</div>
<div class="t" style="top:498.5px;height:31px;line-height:31px;font-size:22px;color:#d7d9e0;letter-spacing:0.452px;left:1933px;">hair,bangs,blue eyes,hair between eyes,eyebrows</div>
<div class="t" style="top:528.25px;height:31px;line-height:31px;font-size:22px;color:#d7d9e0;letter-spacing:0.521px;left:1933px;">visible through hair,blush,white shirt,white sailor</div>
<div class="t" style="top:558.0px;height:31px;line-height:31px;font-size:22px;color:#d7d9e0;letter-spacing:0.510px;left:1933px;">collar,red bow,pink cardigan,very long sleeves,red</div>
<div class="t" style="top:587.75px;height:31px;line-height:31px;font-size:22px;color:#d7d9e0;letter-spacing:0.601px;left:1933px;">bowtie,light blue skirt,pleated skirt,flat chest,white</div>
<div class="t" style="top:617.5px;height:31px;line-height:31px;font-size:22px;color:#d7d9e0;letter-spacing:0.507px;left:1933px;">thighhighs,</div>
<div class="t" style="top:647.25px;height:31px;line-height:31px;font-size:22px;color:#d7d9e0;letter-spacing:0.495px;left:1933px;">smile,standing,holding person,eye</div>
<div class="t" style="top:677.0px;height:31px;line-height:31px;font-size:22px;color:#d7d9e0;letter-spacing:0.599px;left:1933px;">contact,affectionate,open mouth,</div>
<svg viewBox="0 0 256 256" style="left:2505.5px;top:438.5px;width:19px;height:19px;color:#d96c6c;"><line x1="200" y1="56" x2="56" y2="200" fill="none" stroke="currentColor" stroke-width="24" stroke-linecap="round" stroke-linejoin="round"/><line x1="200" y1="200" x2="56" y2="56" fill="none" stroke="currentColor" stroke-width="24" stroke-linecap="round" stroke-linejoin="round"/></svg>
<svg viewBox="0 0 256 256" style="left:2505.0px;top:466.0px;width:21px;height:21px;color:#8991a4;"><polyline points="64,88 16,128 64,168" fill="none" stroke="currentColor" stroke-width="24" stroke-linecap="round" stroke-linejoin="round"/><polyline points="192,88 240,128 192,168" fill="none" stroke="currentColor" stroke-width="24" stroke-linecap="round" stroke-linejoin="round"/><line x1="160" y1="40" x2="96" y2="216" fill="none" stroke="currentColor" stroke-width="24" stroke-linecap="round" stroke-linejoin="round"/></svg>
<svg viewBox="0 0 22 23" style="left:2509.5px;top:700.5px;width:22px;height:23px"><path d="M0,23 L22,0 M5.5,23 L22,5.75 M11,23 L22,11.5 M16.5,23 L22,17.25" stroke="#979eaf" stroke-width="1.3" fill="none"/></svg>
<div style="left:1923px;top:815px;width:610px;height:193px;border-radius:6px;border:1px solid #434956;"></div>
<div class="t" style="top:824.0px;height:31px;line-height:31px;font-size:22px;color:#d7d9e0;letter-spacing:0.434px;left:1933px;">cute,long hair,silver hair,blue hair,(medium</div>
<div class="t" style="top:853.75px;height:31px;line-height:31px;font-size:22px;color:#d7d9e0;letter-spacing:0.432px;left:1933px;">hair:0.6),single hair intake,braided,purple eyes,hair</div>
<div class="t" style="top:883.5px;height:31px;line-height:31px;font-size:22px;color:#d7d9e0;letter-spacing:0.590px;left:1933px;">ornament,white shirt,collared shirt,purple bow,purple</div>
<div class="t" style="top:913.25px;height:31px;line-height:31px;font-size:22px;color:#d7d9e0;letter-spacing:0.512px;left:1933px;">bowtie,short sleeves,small breasts,shirt tucked in,black</div>
<div class="t" style="top:943.0px;height:31px;line-height:31px;font-size:22px;color:#d7d9e0;letter-spacing:0.594px;left:1933px;">skirt,white thighhighs,</div>
<div class="t" style="top:972.75px;height:31px;line-height:31px;font-size:22px;color:#d7d9e0;letter-spacing:0.450px;left:1933px;">eye contact,smile,closed mouth,</div>
<svg viewBox="0 0 256 256" style="left:2505.5px;top:823.5px;width:19px;height:19px;color:#d96c6c;"><line x1="200" y1="56" x2="56" y2="200" fill="none" stroke="currentColor" stroke-width="24" stroke-linecap="round" stroke-linejoin="round"/><line x1="200" y1="200" x2="56" y2="56" fill="none" stroke="currentColor" stroke-width="24" stroke-linecap="round" stroke-linejoin="round"/></svg>
<svg viewBox="0 0 256 256" style="left:2505.0px;top:851.0px;width:21px;height:21px;color:#8991a4;"><polyline points="64,88 16,128 64,168" fill="none" stroke="currentColor" stroke-width="24" stroke-linecap="round" stroke-linejoin="round"/><polyline points="192,88 240,128 192,168" fill="none" stroke="currentColor" stroke-width="24" stroke-linecap="round" stroke-linejoin="round"/><line x1="160" y1="40" x2="96" y2="216" fill="none" stroke="currentColor" stroke-width="24" stroke-linecap="round" stroke-linejoin="round"/></svg>
<svg viewBox="0 0 22 23" style="left:2509.5px;top:983.5px;width:22px;height:23px"><path d="M0,23 L22,0 M5.5,23 L22,5.75 M11,23 L22,11.5 M16.5,23 L22,17.25" stroke="#979eaf" stroke-width="1.3" fill="none"/></svg>
<div style="left:2262px;top:976px;width:1px;height:25px;background:#f1f2f4;"></div>
</body></html>
